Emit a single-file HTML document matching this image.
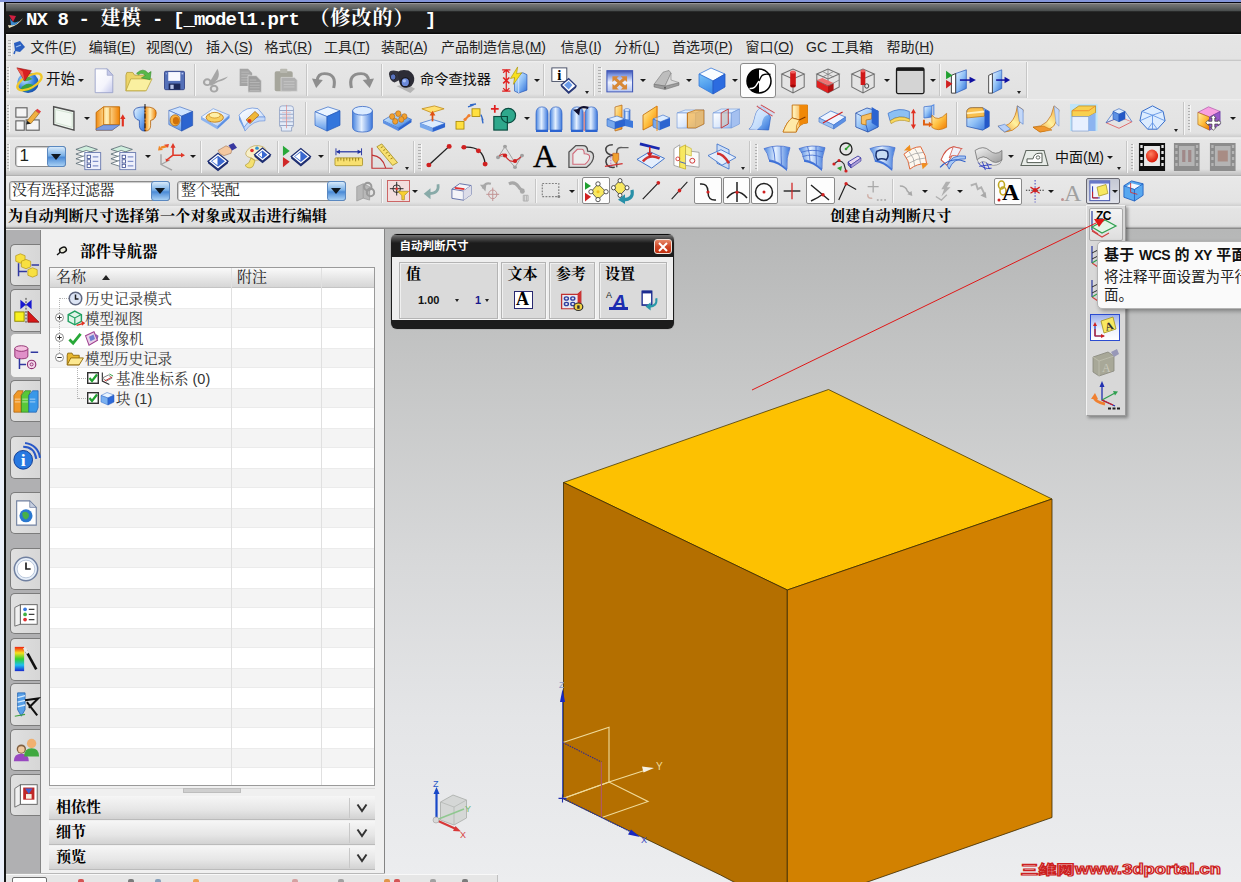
<!DOCTYPE html><html lang="zh"><head><meta charset="utf-8"><title>NX 8</title><style>
*{margin:0;padding:0;box-sizing:border-box}
html,body{width:1241px;height:882px;overflow:hidden;background:#e6e6e6;font-family:"Liberation Sans","Noto Sans CJK SC",sans-serif;}
.a{position:absolute}
.t{position:absolute;white-space:nowrap;line-height:1}
.song{font-family:"Liberation Serif","Noto Serif CJK SC",serif}
.song2{font-family:"Liberation Sans","Noto Serif CJK SC",serif}
.hei{font-family:"Liberation Sans","Noto Sans CJK SC",sans-serif}
.mono{font-family:"Liberation Mono","Noto Serif CJK SC",monospace}
u{text-decoration:underline;text-underline-offset:1px}
svg{position:absolute;overflow:visible}
.grip{position:absolute;width:2.5px;background-image:repeating-linear-gradient(to bottom,#b0b0b0 0,#b0b0b0 1.2px,transparent 1.2px,transparent 3px);box-shadow:1px 0 0 rgba(255,255,255,0.7)}
.sep{position:absolute;width:2px;background:linear-gradient(to right,#c6c6c6 0,#c6c6c6 1px,#f6f6f6 1px,#f6f6f6 2px)}
.dd{position:absolute;width:0;height:0;border-left:3px solid transparent;border-right:3px solid transparent;border-top:3.8px solid #1a1a1a}
.dds{position:absolute;width:0;height:0;border-left:2.5px solid transparent;border-right:2.5px solid transparent;border-top:3px solid #222}
.tab{position:absolute;left:9.5px;width:31.5px;background:linear-gradient(to right,#e0e0e0,#d6d6d6);border:1px solid #7c7c7c;border-right:none;border-radius:5px 0 0 5px}
.hl{position:absolute;background:#fdfdfd;border:1px solid #8a8a8a;border-radius:2px}
</style></head><body>
<div class="a" style="left:0;top:0;width:1241px;height:3px;background:#8395da"></div>
<div class="a" style="left:0;top:2px;width:4px;height:880px;background:#ecf0fa"></div>
<div class="a" style="left:4px;top:2px;width:1237px;height:32px;background:linear-gradient(to bottom,#050510 0,#050510 1px,#a4a4a4 1px,#747474 2.5px,#5c6060 6px,#484c4c 9px,#1c1c1c 9.7px,#1c1c1c 30px,#0a0a0a 31px)"></div>
<div class="a" style="left:4px;top:2px;width:1.5px;height:880px;background:#151515"></div>
<div class="t mono" style="left:26px;top:7.5px;font-size:19px;font-weight:bold;color:#fff;letter-spacing:-0.9px">NX 8 - <span class="song" style="font-size:20px;letter-spacing:0.5px;margin-left:1px">建模</span> - [_model1.prt <span class="song" style="font-size:20px;letter-spacing:1px">（修改的）</span> ]</div>
<svg style="left:7px;top:13px" width="18" height="16" viewBox="0 0 18 16"><path d="M2 2 L9 3 L6 9 Z" fill="#d02040"/><path d="M1 12 Q8 14 16 5 Q12 12 2 15 Z" fill="#e8e0c0"/><path d="M3 5 Q6 12 12 8 Q9 13 4 12 Z" fill="#3a8ad0"/></svg>
<div class="a" style="left:5.5px;top:34px;width:1236px;height:27px;background:linear-gradient(to bottom,#fafafa 0,#e5e5e5 1.5px,#e3e3e3 25px,#c8c8c8 26.5px,#dcdcdc 27px)"></div>
<div class="grip" style="left:8px;top:40px;height:16px"></div>
<div class="t hei" id="m0" style="left:30.5px;top:40px;font-size:14px;color:#222">文件(<u>F</u>)</div>
<div class="t hei" id="m1" style="left:88.7px;top:40px;font-size:14px;color:#222">编辑(<u>E</u>)</div>
<div class="t hei" id="m2" style="left:146.0px;top:40px;font-size:14px;color:#222">视图(<u>V</u>)</div>
<div class="t hei" id="m3" style="left:206.0px;top:40px;font-size:14px;color:#222">插入(<u>S</u>)</div>
<div class="t hei" id="m4" style="left:264.6px;top:40px;font-size:14px;color:#222">格式(<u>R</u>)</div>
<div class="t hei" id="m5" style="left:324.0px;top:40px;font-size:14px;color:#222">工具(<u>T</u>)</div>
<div class="t hei" id="m6" style="left:381.0px;top:40px;font-size:14px;color:#222">装配(<u>A</u>)</div>
<div class="t hei" id="m7" style="left:441.0px;top:40px;font-size:14px;color:#222">产品制造信息(<u>M</u>)</div>
<div class="t hei" id="m8" style="left:560.5px;top:40px;font-size:14px;color:#222">信息(<u>I</u>)</div>
<div class="t hei" id="m9" style="left:614.5px;top:40px;font-size:14px;color:#222">分析(<u>L</u>)</div>
<div class="t hei" id="m10" style="left:672.0px;top:40px;font-size:14px;color:#222">首选项(<u>P</u>)</div>
<div class="t hei" id="m11" style="left:745.5px;top:40px;font-size:14px;color:#222">窗口(<u>O</u>)</div>
<div class="t hei" id="m12" style="left:806.0px;top:40px;font-size:14px;color:#222">GC 工具箱</div>
<div class="t hei" id="m13" style="left:886.5px;top:40px;font-size:14px;color:#222">帮助(<u>H</u>)</div>
<svg style="left:11px;top:39px" width="16" height="16" viewBox="0 0 16 16"><path d="M3 4 L9 2 L14 8 L9 13 L4 12 Z" fill="#2a5fc0"/><path d="M4 12 L3 15" stroke="#2a5fc0" stroke-width="1.5"/><path d="M5 8 L10 6" stroke="#9cc0f0" stroke-width="1.2"/></svg>
<div class="a" style="left:5.5px;top:61px;width:1236px;height:38px;background:linear-gradient(to bottom,#f0f0f0 0,#e6e6e6 2px,#e2e2e2 33px,#d2d2d2 36.5px,#e8e8e8 37px)"></div>
<div class="a" style="left:1027px;top:61px;width:214px;height:38px;background:#e5e5e5"></div>
<div class="a" style="left:5.5px;top:99px;width:1236px;height:39px;background:linear-gradient(to bottom,#f0f0f0 0,#e6e6e6 2px,#e2e2e2 34px,#d0d0d0 37.5px,#e8e8e8 38px)"></div>
<div class="a" style="left:5.5px;top:138px;width:1236px;height:38px;background:linear-gradient(to bottom,#f0f0f0 0,#e6e6e6 2px,#e0e0e0 31px,#c4c4c4 36.5px,#a8a8a8 38px)"></div>
<div class="a" style="left:5.5px;top:176px;width:1236px;height:30px;background:linear-gradient(to bottom,#eeeeee 0,#e8e8e8 2px,#e3e3e3 26px,#d2d2d2 29.5px,#c8c8c8 30px)"></div>
<div class="a" style="left:5.5px;top:206px;width:1236px;height:23px;background:linear-gradient(to bottom,#ececec 0,#e4e4e4 3px,#e0e0e0 19px,#d0d0d0 21px,#8c8c8c 22px,#8c8c8c 23px)"></div>
<div class="t song" style="left:8px;top:209px;font-size:15px;font-weight:bold;color:#000;letter-spacing:0.2px">为自动判断尺寸选择第一个对象或双击进行编辑</div>
<div class="t song" style="left:830px;top:209px;font-size:15px;font-weight:bold;color:#000;letter-spacing:0.2px">创建自动判断尺寸</div>
<svg width="0" height="0" style="left:0;top:0"><defs>
<linearGradient id="gB" x1="0" y1="0" x2="1" y2="1"><stop offset="0" stop-color="#e8f4ff"/><stop offset="0.5" stop-color="#8fc0f6"/><stop offset="1" stop-color="#2f6fd8"/></linearGradient>
<linearGradient id="gBh" x1="0" y1="0" x2="1" y2="0"><stop offset="0" stop-color="#4a86e0"/><stop offset="0.45" stop-color="#e4f0ff"/><stop offset="1" stop-color="#3c78dc"/></linearGradient>
<linearGradient id="gBv" x1="0" y1="0" x2="0" y2="1"><stop offset="0" stop-color="#eef6ff"/><stop offset="1" stop-color="#5c98ea"/></linearGradient>
<linearGradient id="gO" x1="0" y1="0" x2="1" y2="1"><stop offset="0" stop-color="#fff0b0"/><stop offset="0.5" stop-color="#ffc040"/><stop offset="1" stop-color="#f07800"/></linearGradient>
<linearGradient id="gOh" x1="0" y1="0" x2="1" y2="0"><stop offset="0" stop-color="#f08a10"/><stop offset="0.45" stop-color="#fff0b8"/><stop offset="1" stop-color="#f08000"/></linearGradient>
<linearGradient id="gY" x1="0" y1="0" x2="1" y2="1"><stop offset="0" stop-color="#fffbd0"/><stop offset="1" stop-color="#f0c830"/></linearGradient>
<linearGradient id="gG" x1="0" y1="0" x2="1" y2="1"><stop offset="0" stop-color="#f4f4f4"/><stop offset="1" stop-color="#9a9a9a"/></linearGradient>
<linearGradient id="gCombo" x1="0" y1="0" x2="0" y2="1"><stop offset="0" stop-color="#cfe4f8"/><stop offset="0.5" stop-color="#5b9ee0"/><stop offset="1" stop-color="#9cc8f0"/></linearGradient>
<radialGradient id="gGlobe" cx="0.35" cy="0.35" r="0.8"><stop offset="0" stop-color="#bfe4ff"/><stop offset="0.6" stop-color="#2a78d8"/><stop offset="1" stop-color="#103c90"/></radialGradient>
<radialGradient id="gRed" cx="0.4" cy="0.35" r="0.7"><stop offset="0" stop-color="#ff8060"/><stop offset="1" stop-color="#d81000"/></radialGradient>
<linearGradient id="gBl" x1="0" y1="0" x2="1" y2="1"><stop offset="0" stop-color="#ffffff"/><stop offset="0.6" stop-color="#dbe8fb"/><stop offset="1" stop-color="#8db4f0"/></linearGradient><linearGradient id="gOb" x1="0" y1="1" x2="1" y2="0"><stop offset="0" stop-color="#f08418"/><stop offset="0.5" stop-color="#fff2a0"/><stop offset="1" stop-color="#f8a030"/></linearGradient></defs></svg><div class="grip" style="left:6.5px;top:67px;height:27px"></div><svg style="left:14px;top:66px" width="29" height="28" viewBox="0 0 30 30" preserveAspectRatio="none"><circle cx="14.500" cy="18" r="11" fill="url(#gGlobe)"/><path d="M7 24 Q13 16 21 21 Q18 28 10 27 Z" fill="#3aa040"/><path d="M9 12 Q14 9 19 14 Q14 17 10 16 Z" fill="#48a848"/><ellipse cx="16" cy="17" rx="14" ry="6.500" fill="none" stroke="#f0c828" stroke-width="2.400" transform="rotate(-30 16 17)"/><path d="M3 2 L18 5 L11 16 Z" fill="#d82020" stroke="#901010" stroke-width="0.6"/><path d="M3 2 L11 16 L9 6 Z" fill="#f06050"/></svg><div class="t hei" style="left:46px;top:72px;font-size:14.5px;color:#111;">开始</div><div class="dd" style="left:78px;top:78.7px"></div><svg style="left:92px;top:66.5px" width="24" height="27.5" viewBox="0 0 30 30" preserveAspectRatio="none"><defs><linearGradient id="gNew" x1="0" y1="0" x2="1" y2="1"><stop offset="0" stop-color="#ffffff"/><stop offset="0.6" stop-color="#f4f4fc"/><stop offset="1" stop-color="#c4c8ec"/></linearGradient></defs><path d="M4 2 L19 2 L26 9 L26 28 L4 28 Z" fill="url(#gNew)" stroke="#98a0c8" stroke-width="1"/><path d="M19 2 L19 9 L26 9 Z" fill="#c4c8e8" stroke="#98a0c8" stroke-width="0.8"/></svg><svg style="left:124px;top:65.5px" width="29" height="27.5" viewBox="0 0 30 30" preserveAspectRatio="none"><path d="M2 10 L2 27 L22 27 L22 10 L11 10 L9 7 L3 7 Z" fill="#ecd468" stroke="#b09a30" stroke-width="0.8"/><path d="M2 27 L7 14 L29 14 L23 27 Z" fill="#faf0a0" stroke="#b8a238" stroke-width="0.8"/><path d="M13 8 Q20 1 25 8 L28 6 L27 15 L18 13 L22 10.500 Q19 6 15 9.500 Z" fill="#58b848" stroke="#308828" stroke-width="0.6"/></svg><svg style="left:162px;top:69px" width="25" height="23" viewBox="0 0 30 30" preserveAspectRatio="none"><rect x="3" y="3" width="24" height="24" rx="1.500" fill="#5470b8" stroke="#2a3a80" stroke-width="1"/><rect x="7.500" y="4" width="14.500" height="11.500" fill="#f8f8ff"/><rect x="8" y="19" width="14" height="8" fill="#1c2858"/><rect x="10" y="20.500" width="4" height="5.500" fill="#b8c4e8"/><rect x="23.500" y="5" width="2" height="2" fill="#b8c4f0"/><rect x="4.500" y="5" width="1.500" height="2" fill="#8ea0d8"/></svg><div class="sep" style="left:194px;top:64px;height:32px"></div><svg style="left:201px;top:67px" width="29" height="26" viewBox="0 0 30 30" preserveAspectRatio="none"><path d="M17 2 Q20 8 17 14 L11 21 L8.500 18.500 Z" fill="#a6a6a6"/><path d="M28 11 Q24 16 18 17 L10 22 L9 19 Z" fill="#a6a6a6"/><g fill="none" stroke="#a6a6a6" stroke-width="2.200"><circle cx="6.500" cy="17.500" r="3.400"/><circle cx="13.500" cy="25" r="3.400"/></g></svg><svg style="left:238px;top:67px" width="25" height="26" viewBox="0 0 30 30" preserveAspectRatio="none"><path d="M2 2 L12 2 L17 7 L17 22 L2 22 Z" fill="#a4a4a4"/><path d="M4 6h9M4 9h11M4 12h11M4 15h11M4 18h11" stroke="#bcbcbc" stroke-width="1"/><path d="M12 10 L22 10 L28 16 L28 29 L12 29 Z" fill="#9e9e9e" stroke="#dcdcdc" stroke-width="0.8"/><path d="M14 15h8M14 18h12M14 21h12M14 24h12M14 27h12" stroke="#bcbcbc" stroke-width="1"/></svg><svg style="left:272px;top:67px" width="27" height="26" viewBox="0 0 30 30" preserveAspectRatio="none"><rect x="3" y="5" width="20" height="23" rx="2" fill="#a6a69c"/><rect x="9" y="2" width="8" height="5" rx="1" fill="#b8b8b0"/><path d="M10 12 L25 12 L28 15 L28 28 L10 28 Z" fill="#b0b0b0" stroke="#d8d8d8" stroke-width="0.8"/><path d="M13 17h12M13 20h12M13 23h12" stroke="#c8c8c8" stroke-width="1"/></svg><div class="sep" style="left:305.5px;top:64px;height:32px"></div><svg style="left:312px;top:68px" width="25" height="24" viewBox="0 0 30 30" preserveAspectRatio="none"><path d="M26 25 Q30 7 15 7 Q7 7 6 16" fill="none" stroke="#8e8e8e" stroke-width="3.600"/><path d="M0 13 L13 15 L5 25 Z" fill="#8e8e8e"/></svg><svg style="left:348px;top:68px" width="26" height="24" viewBox="0 0 30 30" preserveAspectRatio="none"><path d="M4 25 Q0 7 15 7 Q23 7 24 16" fill="none" stroke="#8e8e8e" stroke-width="3.600"/><path d="M30 13 L17 15 L25 25 Z" fill="#8e8e8e"/></svg><div class="sep" style="left:381px;top:64px;height:32px"></div><svg style="left:388px;top:67px" width="28" height="26" viewBox="0 0 30 30" preserveAspectRatio="none"><path d="M9 22 L24 30 L29 25 L20 20 Z" fill="#b4b4b4"/><path d="M1 8 Q1 4 6 4 L11 5 L14 14 L7 18 Q2 16 1 8 Z" fill="#34343e"/><ellipse cx="5.500" cy="11.500" rx="3" ry="3.600" fill="#5a74c0" stroke="#20202a" stroke-width="1"/><path d="M10 6 Q14 2 22 4 Q29 8 28 16 Q27 23 20 24 Q13 24 12 17 Z" fill="#2c2c36"/><ellipse cx="18.500" cy="17.500" rx="4.600" ry="5.200" fill="#6a88d8" stroke="#181820" stroke-width="1.400"/><ellipse cx="17.500" cy="16" rx="1.800" ry="2" fill="#a8c0f4"/></svg><div class="t hei" style="left:420px;top:72px;font-size:14.2px;color:#111;">命令查找器</div><svg style="left:498px;top:65px" width="31" height="29" viewBox="0 0 30 30" preserveAspectRatio="none"><path d="M16 12 L24 8 L28 10 L28 26 L20 29 L16 27 Z" fill="url(#gB)" stroke="#2858b8" stroke-width="0.7"/><path d="M16 12 L20 14 L20 29" fill="none" stroke="#dceaff" stroke-width="0.8"/><path d="M12 14 L19 2 L18 9 L23 8 L15 20 L16 13 Z" fill="#f8e020" stroke="#a89000" stroke-width="0.6"/><path d="M8 5 L8 27 M5 8 L8 5 L11 8 M5 24 L8 27 L11 24 M4 5h8 M4 27h8" fill="none" stroke="#e02020" stroke-width="1.2"/><path d="M5 13 L11 19 M11 13 L5 19" stroke="#e02020" stroke-width="1.5"/></svg><div class="dd" style="left:533.5px;top:78.7px"></div><div class="sep" style="left:543px;top:64px;height:32px"></div><svg style="left:550px;top:67px" width="28" height="27" viewBox="0 0 30 30" preserveAspectRatio="none"><rect x="2" y="1" width="16" height="15" fill="#fff" stroke="#404860" stroke-width="1"/><text x="10" y="14.5" font-family="Liberation Serif, serif" font-weight="bold" font-size="16" text-anchor="middle" fill="#000">i</text><path d="M12 20 L20 13 L28 21 L20 28 Z" fill="#fff" stroke="#283878" stroke-width="1.4"/><path d="M15 20 L20 15.5 L24 20 L20 25 Z" fill="#6a9ae8"/><path d="M12 20 L20 28 L28 21 L28 23 L20 30 L12 22 Z" fill="#283878"/></svg><div class="dds" style="left:584.5px;top:90.5px"></div><div class="sep" style="left:593px;top:64px;height:32px"></div><div class="grip" style="left:598px;top:67px;height:27px"></div><svg style="left:605.5px;top:68.5px" width="27.5" height="24.5" viewBox="0 0 30 30" preserveAspectRatio="none"><defs><linearGradient id="gFit" x1="0" y1="0" x2="0" y2="1"><stop offset="0" stop-color="#3c50b0"/><stop offset="0.180" stop-color="#7890dc"/><stop offset="0.550" stop-color="#eef2ff"/><stop offset="1" stop-color="#b4c4f0"/></linearGradient></defs><rect x="1" y="2" width="28" height="26" fill="url(#gFit)" stroke="#4058b8" stroke-width="1.200"/><g fill="#d88838"><path d="M7 9 L14 9 L7 16 Z"/><path d="M23 9 L16 9 L23 16 Z"/><path d="M7 25 L14 25 L7 18 Z"/><path d="M23 25 L16 25 L23 18 Z"/><path d="M10 12 L20 22 M20 12 L10 22" stroke="#d88838" stroke-width="3.600"/></g></svg><div class="dd" style="left:640px;top:78.7px"></div><svg style="left:651px;top:67px" width="30" height="26" viewBox="0 0 30 30" preserveAspectRatio="none"><path d="M3 20 L12 6 L18 4 L20 7 L14 22 Z" fill="#bdbdbd" stroke="#808080" stroke-width="0.7"/><path d="M3 20 L14 22 L28 18 L28 21 L14 26 L3 23 Z" fill="#9c9c9c" stroke="#707070" stroke-width="0.6"/><path d="M14 22 L20 7 L20 15 L28 18 Z" fill="#d8d8d8" stroke="#808080" stroke-width="0.6"/><circle cx="14" cy="24" r="1" fill="#505050"/></svg><div class="dd" style="left:686px;top:78.7px"></div><svg style="left:697px;top:65px" width="30" height="30" viewBox="0 0 30 30" preserveAspectRatio="none"><defs><linearGradient id="gBc" x1="0" y1="0" x2="0.300" y2="1"><stop offset="0" stop-color="#7cc4f8"/><stop offset="1" stop-color="#3c8ce8"/></linearGradient></defs><path d="M2 9 L14 3 L28 9 L16 16 Z" fill="#fafdff" stroke="#3878d8" stroke-width="0.8"/><path d="M2 9 L16 16 L16 29 L2 21 Z" fill="url(#gBc)" stroke="#3878d8" stroke-width="0.8"/><path d="M16 16 L28 9 L28 22 L16 29 Z" fill="#2c6ce0" stroke="#2458c0" stroke-width="0.8"/></svg><div class="dd" style="left:732px;top:78.7px"></div><div class="hl" style="left:740px;top:63px;width:36px;height:34.5px;border-radius:3px"></div><svg style="left:743.5px;top:65.5px" width="30" height="30" viewBox="0 0 30 30" preserveAspectRatio="none"><circle cx="15" cy="15" r="12" fill="#fff" stroke="#000" stroke-width="1.500"/><path d="M15 3 A12 12 0 0 0 15 27 Z" fill="#000"/><path d="M5.500 22.500 Q11 23 13 18 L15 15" stroke="#fff" fill="none" stroke-width="1.400"/><path d="M15 15 L17 11 Q19 7 26.500 8.500" stroke="#000" fill="none" stroke-width="1.400"/></svg><svg style="left:779px;top:65px" width="28" height="30" viewBox="0 0 30 30" preserveAspectRatio="none"><path d="M3 9 L15 4 L27 9 L15 14 Z M3 9 L3 22 L15 28 L27 22 L27 9 M15 14 L15 28" fill="#e4e4e4" fill-opacity="0.7" stroke="#707070" stroke-width="1.1"/><rect x="12" y="7" width="6" height="14" fill="#d01818"/><ellipse cx="15" cy="7" rx="3" ry="1.6" fill="#f06060"/><ellipse cx="15" cy="21" rx="3" ry="1.6" fill="#a00808"/></svg><svg style="left:814px;top:65px" width="28" height="30" viewBox="0 0 30 30" preserveAspectRatio="none"><path d="M3 9 L15 4 L27 9 L15 14 Z M3 9 L3 22 L15 28 L27 22 L27 9 M15 14 L15 28" fill="#e4e4e4" fill-opacity="0.7" stroke="#707070" stroke-width="1.1"/><path d="M3 15 L15 20 L15 28 L3 22 Z" fill="#e02020"/><path d="M15 20 L21 18 L21 25 L15 28 Z" fill="#b01010"/><path d="M3 15 L9 13 L21 18 L15 20 Z" fill="#f07070"/><path d="M3 15 L15 21 L27 15 M15 4 L15 14 M9 6.5 L21 12 M21 6.5 L9 12" fill="none" stroke="#808080" stroke-width="0.8"/></svg><svg style="left:849px;top:65px" width="28" height="30" viewBox="0 0 30 30" preserveAspectRatio="none"><path d="M3 9 L15 4 L27 9 L15 14 Z M3 9 L3 22 L15 28 L27 22 L27 9 M15 14 L15 28" fill="#e4e4e4" fill-opacity="0.7" stroke="#707070" stroke-width="1.1"/><rect x="12.5" y="6" width="5" height="14" fill="#d01818"/><ellipse cx="15" cy="6" rx="2.5" ry="1.4" fill="#f06060"/><circle cx="19" cy="21" r="2.2" fill="none" stroke="#404040" stroke-width="1"/></svg><div class="dd" style="left:884px;top:78.7px"></div><svg style="left:894.5px;top:65.5px" width="30.5" height="29.5" viewBox="0 0 30 30" preserveAspectRatio="none"><rect x="1.5" y="2" width="27" height="26" rx="1.5" fill="#d4d4d4" stroke="#1a1a1a" stroke-width="1.3"/><rect x="1.5" y="2" width="27" height="3" fill="#1a1a1a"/></svg><div class="dd" style="left:930px;top:78.7px"></div><div class="sep" style="left:939px;top:64px;height:32px"></div><svg style="left:945px;top:67px" width="32" height="28" viewBox="0 0 30 30" preserveAspectRatio="none"><path d="M10 7 L20 3 L20 23 L10 28 Z" fill="url(#gB)" stroke="#2858b8" stroke-width="0.7"/><path d="M6 9 L10 7 L10 28 L6 28 Z" fill="#fff" stroke="#303030" stroke-width="0.9"/><path d="M1 4 L7 9 L1 13 Z" fill="#20a030"/><path d="M1 14 L7 18 L1 23 Z" fill="#d02020"/><path d="M14 14 L24 14" stroke="#1010a0" stroke-width="1.6"/><path d="M23 10.5 L29 14 L23 17.5 Z" fill="#1010a0"/></svg><svg style="left:984px;top:67px" width="28" height="28" viewBox="0 0 30 30" preserveAspectRatio="none"><path d="M9 7 L19 3 L19 23 L9 28 Z" fill="url(#gB)" stroke="#2858b8" stroke-width="0.7"/><path d="M5 9 L9 7 L9 28 L5 28 Z" fill="#fff" stroke="#303030" stroke-width="0.9"/><path d="M13 14 L23 14" stroke="#1010a0" stroke-width="1.6"/><path d="M22 10.5 L28 14 L22 17.5 Z" fill="#1010a0"/></svg><div class="dds" style="left:1016.5px;top:90.5px"></div><div class="sep" style="left:1025.5px;top:62px;height:36px"></div><div class="grip" style="left:6.5px;top:105px;height:27px"></div><svg style="left:14px;top:105px" width="28" height="28" viewBox="0 0 30 30" preserveAspectRatio="none"><rect x="2" y="3" width="12" height="10" fill="#f4f4f4" stroke="#606060" stroke-width="1.2"/><rect x="2" y="17" width="9" height="10" fill="#f4f4f4" stroke="#606060" stroke-width="1.2"/><rect x="13" y="16" width="14" height="11" fill="#f4f4f4" stroke="#606060" stroke-width="1.2"/><path d="M14 17 L23 6 L27 9 L18 20 Z" fill="#f0b040" stroke="#805010" stroke-width="0.6"/><path d="M23 6 L25 4 L29 7 L27 9 Z" fill="#e04040"/><path d="M14 17 L13 21 L18 20 Z" fill="#202020"/></svg><svg style="left:50.5px;top:104px" width="26.5" height="28" viewBox="0 0 30 30" preserveAspectRatio="none"><path d="M3 3 L26 8 L26 28 L3 22 Z" fill="#f2f8f2" stroke="#505050" stroke-width="1.6"/><path d="M5 6 L24 10 L24 25 L5 20 Z" fill="none" stroke="#cfe0cf" stroke-width="1"/></svg><div class="dd" style="left:84px;top:116.7px"></div><svg style="left:94px;top:104px" width="32" height="28" viewBox="0 0 30 30" preserveAspectRatio="none"><path d="M2 9 L9 3 L24 3 L24 22 L17 28 L2 28 Z" fill="url(#gOh)" stroke="#c06800" stroke-width="0.9"/><path d="M9 3 L9 22 L2 28 M9 22 L24 22 M15 4 L15 22" fill="none" stroke="#d07808" stroke-width="0.9"/><path d="M2 26.500 L9 22.500 L24 22.500 L17 28 L2 28 Z" fill="#7c9ce0" stroke="#3860b8" stroke-width="0.5"/><path d="M27 24 L27 15" stroke="#e03020" stroke-width="2"/><path d="M24.500 16 L27 11 L29.500 16 Z" fill="#e03020"/></svg><svg style="left:130.5px;top:104px" width="28" height="29" viewBox="0 0 30 30" preserveAspectRatio="none"><path d="M3 8 Q3 3 15 3 L15 28 Q9 28 9 22 L9 17 Q3 16 3 8 Z" fill="url(#gB)" stroke="#1c48a8" stroke-width="0.8"/><path d="M15 3 Q27 3 27 9 Q27 16 21 17 L21 22 Q21 28 15 28 Z" fill="url(#gOh)" stroke="#b05800" stroke-width="0.8"/><path d="M15 0 L15 30" stroke="#101010" stroke-width="1" stroke-dasharray="5 2 1 2"/></svg><svg style="left:166.5px;top:104px" width="27.5" height="28" viewBox="0 0 30 30" preserveAspectRatio="none"><path d="M2 7 L14 3 L28 8 L16 13 Z" fill="#cfe4ff" stroke="#2858b8" stroke-width="0.6"/><path d="M2 7 L16 13 L16 29 L2 22 Z" fill="url(#gBv)" stroke="#2858b8" stroke-width="0.6"/><path d="M16 13 L28 8 L28 23 L16 29 Z" fill="#2c64d0" stroke="#1c48a8" stroke-width="0.6"/><ellipse cx="8.8" cy="17.5" rx="5.4" ry="6" fill="#f8b040" stroke="#a05808" stroke-width="0.7"/><ellipse cx="9.8" cy="18" rx="3.4" ry="4" fill="#d07008"/></svg><svg style="left:199.5px;top:104px" width="30.5" height="28" viewBox="0 0 30 30" preserveAspectRatio="none"><path d="M1 14 L13 5 L29 12 L17 24 Z" fill="url(#gBl)" stroke="#6c98e0" stroke-width="0.7"/><path d="M1 14 L17 24 L17 27 L1 17 Z" fill="#8cb4f0"/><path d="M17 24 L29 12 L29 15 L17 27 Z" fill="#5c90e4"/><ellipse cx="14.500" cy="14.500" rx="8.500" ry="5" fill="#f8d060" stroke="#c07810" stroke-width="0.9"/><ellipse cx="14.500" cy="12" rx="5.500" ry="3" fill="#fff0a8" stroke="#c88818" stroke-width="0.7"/></svg><svg style="left:236px;top:104px" width="30" height="28" viewBox="0 0 30 30" preserveAspectRatio="none"><path d="M3 12 Q10 2 22 5 L29 14 Q16 12 8 25 Z" fill="url(#gBl)" stroke="#5c88d8" stroke-width="0.7"/><path d="M8 25 Q16 12 29 14 L29 18 Q17 17 9 29 Z" fill="#c4d8f8" stroke="#5c88d8" stroke-width="0.6"/><path d="M3 12 L8 25 L9 29 L3 17 Z" fill="#6c9ce8"/><path d="M10 17 L19 8 L23 12 L14 21 Z" fill="#f0b838" stroke="#a06008" stroke-width="0.7"/><circle cx="13.500" cy="18" r="2" fill="#e03020"/></svg><svg style="left:277px;top:104px" width="19" height="28" viewBox="0 0 30 30" preserveAspectRatio="none"><path d="M4 5 Q4 2 8 2 L22 2 Q26 2 26 5 L26 23 Q26 25 23 25 L23 29 L7 29 L7 25 Q4 25 4 23 Z" fill="#e4ecf8" stroke="#8c9cc0" stroke-width="1"/><path d="M4 7h22M4 11h22M4 15h22M4 19h22M4 23h22" stroke="#98a8c8" stroke-width="1.100"/><path d="M15 1 L15 26" stroke="#e09090" stroke-width="1"/><path d="M8 9h14M8 13h14M8 17h14" stroke="#e8a8a8" stroke-width="0.7"/></svg><div class="sep" style="left:304.5px;top:102px;height:33px"></div><svg style="left:312px;top:104px" width="30" height="29" viewBox="0 0 30 30" preserveAspectRatio="none"><path d="M3 8 L16 3 L28 7 L15 13 Z" fill="#eaf4ff" stroke="#3068c8" stroke-width="0.7"/><path d="M3 8 L15 13 L15 28 L3 22 Z" fill="url(#gBv)" stroke="#3068c8" stroke-width="0.7"/><path d="M15 13 L28 7 L28 22 L15 28 Z" fill="#3476dc" stroke="#2458b8" stroke-width="0.7"/></svg><svg style="left:349px;top:104px" width="27" height="29" viewBox="0 0 30 30" preserveAspectRatio="none"><path d="M4 7 L4 24 Q4 29 15 29 Q26 29 26 24 L26 7 Z" fill="url(#gBh)" stroke="#2c60c4" stroke-width="0.8"/><ellipse cx="15" cy="7" rx="11" ry="4.5" fill="#dcecff" stroke="#2c60c4" stroke-width="0.8"/></svg><svg style="left:381.5px;top:103px" width="30.5" height="29" viewBox="0 0 30 30" preserveAspectRatio="none"><path d="M1 18 L14 10 L29 17 L16 26 Z" fill="url(#gB)" stroke="#3068c8" stroke-width="0.7"/><path d="M1 18 L16 26 L16 29 L1 21 Z" fill="#5c90e4"/><path d="M16 26 L29 17 L29 20 L16 29 Z" fill="#2c64d0"/><g fill="#f0a030" stroke="#a05808" stroke-width="0.5"><ellipse cx="10" cy="14" rx="2.6" ry="3"/><ellipse cx="16" cy="11" rx="2.6" ry="3"/><ellipse cx="22" cy="14" rx="2.6" ry="3"/><ellipse cx="13" cy="19" rx="2.6" ry="3"/><ellipse cx="19" cy="17" rx="2.6" ry="3"/></g></svg><svg style="left:418px;top:103px" width="29" height="29" viewBox="0 0 30 30" preserveAspectRatio="none"><path d="M4 6 L17 3 L27 6 L14 10 Z" fill="#ffe070" stroke="#c08810" stroke-width="0.8"/><path d="M2 21 L15 17 L28 21 L15 26 Z" fill="#dcecff" stroke="#3068c8" stroke-width="0.7"/><path d="M2 21 L15 26 L15 30 L2 25 Z" fill="#78a8ec"/><path d="M15 26 L28 21 L28 25 L15 30 Z" fill="#2c64d0"/><path d="M15 19 L15 12" stroke="#e05010" stroke-width="1.8"/><path d="M12 13 L15 8 L18 13 Z" fill="#e05010"/></svg><svg style="left:454px;top:103px" width="30" height="29" viewBox="0 0 30 30" preserveAspectRatio="none"><rect x="2" y="19" width="8" height="8" fill="#ffe040" stroke="#a08000" stroke-width="0.8"/><rect x="18" y="6" width="8" height="8" fill="#ffe040" stroke="#a08000" stroke-width="0.8"/><path d="M11 17 L15 13" stroke="#f08030" stroke-width="2.2"/><circle cx="11" cy="17" r="1.6" fill="#f08030"/><circle cx="15" cy="13" r="1.6" fill="#f08030"/><path d="M14 4 L20 2 M16 2 L22 1 M27 12 L29 18 M28 16 L29 21" stroke="#3068c8" stroke-width="1.4"/></svg><svg style="left:489px;top:103px" width="29" height="29" viewBox="0 0 30 30" preserveAspectRatio="none"><rect x="5" y="14" width="14" height="14" fill="#2fa88c" stroke="#0a4c40" stroke-width="1.2"/><circle cx="20" cy="13" r="7.5" fill="#2fa88c" stroke="#0a4c40" stroke-width="1.2"/><path d="M12.5 14 L19 14 L19 20.5" fill="none" stroke="#084838" stroke-width="1.2"/><path d="M2 6h8M6 2v8" stroke="#e02020" stroke-width="1.8"/></svg><div class="dd" style="left:523.5px;top:116.7px"></div><svg style="left:534px;top:104px" width="30" height="29" viewBox="0 0 30 30" preserveAspectRatio="none"><path d="M2 27 L2 10 Q2 3 8 3 Q14 3 14 10 L14 27 Z" fill="url(#gBh)" stroke="#2c60c4" stroke-width="0.7"/><path d="M16 27 L16 10 Q16 3 22 3 Q28 3 28 10 L28 27 Z" fill="url(#gBh)" stroke="#2c60c4" stroke-width="0.7"/><path d="M2 27 L14 27 L14 29 L2 29 Z M16 27 L28 27 L28 29 L16 29 Z" fill="#2c64d0"/></svg><svg style="left:569px;top:104px" width="30.5" height="29" viewBox="0 0 30 30" preserveAspectRatio="none"><path d="M2 27 L2 10 Q2 3 8 3 Q14 3 14 10 L14 27 Z" fill="url(#gBh)" stroke="#2c60c4" stroke-width="0.7"/><path d="M16 27 L16 10 Q16 3 22 3 Q28 3 28 10 L28 27 Z" fill="url(#gBh)" stroke="#2c60c4" stroke-width="0.7"/><path d="M2 27 L14 27 L14 29 L2 29 Z M16 27 L28 27 L28 29 L16 29 Z" fill="#2c64d0"/><path d="M15 8 L15 28" stroke="#e08080" stroke-width="1.2"/><path d="M8 9 Q10 1 19 4" fill="none" stroke="#101030" stroke-width="2.2"/><path d="M4 6 L10 12 L11 5 Z" fill="#101030"/></svg><svg style="left:605px;top:103px" width="30" height="30" viewBox="0 0 30 30" preserveAspectRatio="none"><path d="M10 4 L17 2 L17 26 L10 28 Z" fill="url(#gO)" stroke="#b05800" stroke-width="0.7" opacity="0.9"/><path d="M2 16 L12 13 L20 16 L10 19 Z" fill="#dcecff" stroke="#3068c8" stroke-width="0.6"/><path d="M2 16 L10 19 L10 26 L2 23 Z" fill="#78a8ec" stroke="#3068c8" stroke-width="0.6"/><path d="M10 19 L20 16 L20 23 L10 26 Z" fill="#2c64d0"/><rect x="19" y="7" width="6" height="10" fill="url(#gBh)" stroke="#2c60c4" stroke-width="0.6"/><ellipse cx="22" cy="7" rx="3" ry="1.4" fill="#dcecff" stroke="#2c60c4" stroke-width="0.5"/><path d="M20 16 L28 18 L28 25 L20 23 Z" fill="#3c78dc"/></svg><svg style="left:640.5px;top:103px" width="30" height="30" viewBox="0 0 30 30" preserveAspectRatio="none"><path d="M2 12 L16 3 L16 20 L2 27 Z" fill="url(#gO)" stroke="#c06800" stroke-width="0.8"/><path d="M12 16 L22 12 L29 15 L19 19 Z" fill="#dcecff" stroke="#3068c8" stroke-width="0.6"/><path d="M12 16 L19 19 L19 27 L12 24 Z" fill="#78a8ec" stroke="#3068c8" stroke-width="0.6"/><path d="M19 19 L29 15 L29 23 L19 27 Z" fill="#2c64d0"/><path d="M16 3 L16 28" stroke="#f09020" stroke-width="1"/></svg><svg style="left:675px;top:103px" width="31" height="30" viewBox="0 0 30 30" preserveAspectRatio="none"><path d="M2 10 L10 7 L28 7 L20 10 Z" fill="#dcecff" stroke="#6c94d8" stroke-width="0.6"/><path d="M2 10 L20 10 L20 25 L2 25 Z" fill="url(#gBl)" stroke="#6c94d8" stroke-width="0.6"/><path d="M20 10 L28 7 L28 21 L20 25 Z" fill="#a4c0f0" stroke="#6c94d8" stroke-width="0.6"/><path d="M12 10 L20 7 L28 7 L28 21 L20 25 L12 25 Z" fill="#f8b850" fill-opacity="0.75" stroke="#c07010" stroke-width="0.7"/><path d="M12 10 L12 25" stroke="#c07010" stroke-width="0.8"/></svg><svg style="left:710.5px;top:103px" width="30.5" height="30" viewBox="0 0 30 30" preserveAspectRatio="none"><path d="M2 10 L10 6 L28 6 L20 10 Z" fill="#dcecff" stroke="#6c94d8" stroke-width="0.6"/><path d="M2 10 L20 10 L20 25 L2 25 Z" fill="url(#gBl)" stroke="#6c94d8" stroke-width="0.6"/><path d="M20 10 L28 6 L28 21 L20 25 Z" fill="#a4c0f0" stroke="#6c94d8" stroke-width="0.6"/><path d="M10 10 L17 6 L17 21 L10 25 Z" fill="#c0c0c0" fill-opacity="0.7" stroke="#c03030" stroke-width="0.9"/></svg><svg style="left:746.5px;top:103px" width="29.5" height="30" viewBox="0 0 30 30" preserveAspectRatio="none"><path d="M2 26 Q6 24 8 14 Q10 5 16 4 L24 14 L22 27 Z" fill="url(#gB)" stroke="#2c60c4" stroke-width="0.7"/><path d="M8 14 Q10 5 16 4 L22 12 Q16 12 15 22 L10 27 L2 26 Q6 24 8 14 Z" fill="#e4f0ff" fill-opacity="0.7"/><path d="M10 3 L26 13 M14 2 L28 10" stroke="#d03030" stroke-width="1.1"/><path d="M14 2 L28 10 L26 13 L10 3 Z" fill="#c8dcf8" fill-opacity="0.6"/></svg><svg style="left:780.5px;top:103px" width="30.5" height="30" viewBox="0 0 30 30" preserveAspectRatio="none"><path d="M11 2 L26 2 L26 20 Q18 20 15 29 L2 29 Q6 18 11 15 Z" fill="url(#gOh)" stroke="#c06800" stroke-width="0.8"/><path d="M18 2 L26 2 L26 20 Q21 20 18 23 Z" fill="#f08808"/><path d="M11 15 L18 17 L24 14" fill="none" stroke="#803800" stroke-width="1.1"/><path d="M2 29 Q6 18 11 15 L18 17 Q14 22 15 29 Z" fill="#ffe9a8" stroke="#c06800" stroke-width="0.6"/></svg><svg style="left:816.5px;top:103px" width="29.5" height="30" viewBox="0 0 30 30" preserveAspectRatio="none"><path d="M2 15 L14 8 L29 14 L17 22 Z" fill="#eef4ff" stroke="#3068c8" stroke-width="0.7"/><path d="M2 15 L17 22 L17 26 L2 19 Z" fill="#9cc0f0" stroke="#3068c8" stroke-width="0.5"/><path d="M17 22 L29 14 L29 18 L17 26 Z" fill="#5c90e4" stroke="#3068c8" stroke-width="0.5"/><path d="M6 20 L26 9" stroke="#d02020" stroke-width="1.2"/></svg><svg style="left:853px;top:103px" width="28" height="30" viewBox="0 0 30 30" preserveAspectRatio="none"><path d="M3 10 L15 5 L27 8 L27 24 L16 29 L3 24 Z" fill="url(#gB)" stroke="#1c48a8" stroke-width="0.8"/><path d="M9 13 L20 10 L20 16 L14 17 L14 22 L9 21 Z" fill="#f8c060" stroke="#b06808" stroke-width="0.7"/><path d="M20 4 L27 8 L27 24 L20 20 Z" fill="#2c64d0"/><path d="M3 10 L9 13 M14 22 L16 29" stroke="#1c48a8" stroke-width="0.7"/></svg><svg style="left:886.5px;top:104px" width="30.5" height="28" viewBox="0 0 30 30" preserveAspectRatio="none"><path d="M1 10 Q12 3 22 8 L22 16 Q12 11 3 18 Z" fill="#8cc0f4" stroke="#3068c8" stroke-width="0.7"/><path d="M3 18 Q12 11 22 16 L22 19 Q12 15 4 21 Z" fill="#f8d860" stroke="#b08810" stroke-width="0.6"/><path d="M26 8 L26 24" stroke="#e03020" stroke-width="1.4"/><path d="M23.5 10 L26 5 L28.5 10 Z M23.5 22 L26 27 L28.5 22 Z" fill="#e03020"/></svg><svg style="left:921.5px;top:104px" width="29.5" height="28" viewBox="0 0 30 30" preserveAspectRatio="none"><path d="M2 3 L10 2 L10 14 L2 15 Z" fill="url(#gB)" stroke="#2c60c4" stroke-width="0.7"/><path d="M10 12 Q16 20 25 10 L25 25 Q16 30 10 25 Z" fill="url(#gO)" stroke="#c06800" stroke-width="0.7"/><path d="M2 17 L2 22 L8 22" fill="none" stroke="#e06010" stroke-width="2"/><path d="M7 19 L11 22 L7 25 Z" fill="#e06010"/><path d="M10 2 L12 1 L12 12" fill="none" stroke="#5c90e4" stroke-width="1.2"/></svg><div class="sep" style="left:956px;top:102px;height:33px"></div><svg style="left:963.5px;top:104px" width="28" height="28" viewBox="0 0 30 30" preserveAspectRatio="none"><path d="M3 9 Q3 4 9 4 L20 4 L27 8 L27 24 L20 28 L3 24 Z" fill="url(#gB)" stroke="#1c48a8" stroke-width="0.7"/><path d="M3 9 Q3 4 9 4 L20 4 Q22 8 22 13 L3 15 Z" fill="#f8c050" stroke="#b06808" stroke-width="0.7"/><path d="M3 10 L22 8" stroke="#fff0c0" stroke-width="2"/><path d="M22 6 L27 8 L27 24 L22 27 Z" fill="#2458c8"/></svg><svg style="left:997px;top:103px" width="29" height="29" viewBox="0 0 30 30" preserveAspectRatio="none"><path d="M1 24 Q18 26 21 3 L27 7 Q26 29 8 30 Z" fill="url(#gOb)" stroke="#c06800" stroke-width="0.7"/><path d="M1 24 L8 30 L4 28 Z" fill="#8cb4f0"/><path d="M21 3 L27 7 L27 22 L23 19 Z" fill="#c4d8f8" stroke="#3068c8" stroke-width="0.5"/><path d="M1 24 L8 22 L14 27 L8 30 Z" fill="#b8d0f8" stroke="#3068c8" stroke-width="0.5"/></svg><svg style="left:1032px;top:103px" width="30" height="29" viewBox="0 0 30 30" preserveAspectRatio="none"><path d="M1 25 Q18 25 22 3 L27 7 Q26 29 8 30 Z" fill="url(#gOb)" stroke="#c06800" stroke-width="0.7"/><path d="M22 3 L27 7 L27 24 L24 21 Z" fill="#c4d8f8" stroke="#7090c8" stroke-width="0.5"/><path d="M1 25 L8 30 L20 28 L12 24 Z" fill="#f09830" stroke="#c06800" stroke-width="0.5"/></svg><svg style="left:1068.5px;top:103px" width="29.5" height="29" viewBox="0 0 30 30" preserveAspectRatio="none"><rect x="1" y="1" width="28" height="28" fill="#bfe4f8"/><path d="M3 8 L10 3 L27 3 L27 10 L20 14 L3 14 Z" fill="#f8d050" stroke="#b08010" stroke-width="0.7"/><path d="M3 14 L20 14 L20 29 L3 29 Z" fill="#e8f0ff" stroke="#7090c8" stroke-width="0.6"/><path d="M20 14 L27 10 L27 29 L20 29 Z" fill="#8cb4f0"/><path d="M3 8 L20 8 L27 3" fill="none" stroke="#f09030" stroke-width="1"/></svg><svg style="left:1104px;top:104px" width="30" height="28" viewBox="0 0 30 30" preserveAspectRatio="none"><path d="M2 20 L15 26 L28 19 L16 14 Z" fill="none" stroke="#e06060" stroke-width="0.9"/><path d="M2 20 L10 8 L16 14 Z M28 19 L21 8 L16 14" fill="#e4ecfc" fill-opacity="0.6" stroke="#3068c8" stroke-width="0.7"/><path d="M9 8 L15 5 L21 8 L15 11 Z" fill="#dcecff" stroke="#2458b8" stroke-width="0.6"/><path d="M9 8 L15 11 L15 19 L9 16 Z" fill="#5c90e4" stroke="#2458b8" stroke-width="0.6"/><path d="M15 11 L21 8 L21 16 L15 19 Z" fill="#2458c8" stroke="#2458b8" stroke-width="0.6"/></svg><svg style="left:1138px;top:104px" width="29" height="28" viewBox="0 0 30 30" preserveAspectRatio="none"><path d="M15 2 L26 8 L28 18 L20 27 L10 27 L2 18 L4 8 Z" fill="#dcecff" stroke="#3068c8" stroke-width="1"/><path d="M4 8 L15 12 L26 8 M15 12 L15 27 M2 18 L15 12 L28 18 M10 27 L15 20 L20 27" fill="none" stroke="#5c90e4" stroke-width="0.9"/></svg><div class="dds" style="left:1173.5px;top:129px"></div><div class="sep" style="left:1183px;top:102px;height:33px"></div><div class="grip" style="left:1187.5px;top:105px;height:27px"></div><svg style="left:1195px;top:104px" width="29" height="28" viewBox="0 0 30 30" preserveAspectRatio="none"><path d="M3 9 L14 3 L26 8 L15 14 Z" fill="#f8a0e0" stroke="#a040a0" stroke-width="0.6"/><path d="M3 9 L15 14 L15 28 L3 22 Z" fill="url(#gO)" stroke="#b06808" stroke-width="0.7"/><path d="M15 14 L26 8 L26 22 L15 28 Z" fill="#9858c8" stroke="#6030a0" stroke-width="0.6"/><path d="M19 12 L22 15 L20.5 15 L20.5 18.500 L24 18.5 L24 17 L27 20 L24 23 L24 21.500 L20.5 21.5 L20.5 25 L22 25 L19 28 L16 25 L17.5 25 L17.5 21.500 L14 21.5 L14 23 L11 20 L14 17 L14 18.500 L17.5 18.5 L17.5 15 L16 15 Z" fill="#fff" stroke="#404040" stroke-width="0.8"/></svg><div class="dd" style="left:1229.5px;top:116.7px"></div><div class="grip" style="left:6.5px;top:144px;height:27px"></div><div class="a" style="left:14.5px;top:146px;width:51.5px;height:20.5px;background:#fff;border:1px solid #8a8a8a;border-radius:3px;box-shadow:inset 1px 1px 1px #c8c8c8"></div><div class="a" style="left:47px;top:146px;width:19px;height:20.5px;background:linear-gradient(to bottom,#d8eafa 0,#7ab0e6 45%,#4a8ad6 55%,#a8d0f4 100%);border:1px solid #5a88c0;border-radius:3px"></div><div class="a" style="left:51px;top:153.75px;width:0;height:0;border-left:5.500px solid transparent;border-right:5.500px solid transparent;border-top:6px solid #101820"></div><div class="t hei" style="left:19.5px;top:147.25px;font-size:17px;color:#1c241c;letter-spacing:-0.400px">1</div><svg style="left:75px;top:144px" width="28" height="27" viewBox="0 0 30 30" preserveAspectRatio="none"><path d="M1 6 L12 2 L24 6 L13 10 Z" fill="#cfeedd" stroke="#5c6c74" stroke-width="0.9"/><path d="M1 11.2 L12 7.2 L24 11.2 L13 15.2 Z" fill="#ffffff" stroke="#5c6c74" stroke-width="0.9"/><path d="M1 16.4 L12 12.4 L24 16.4 L13 20.4 Z" fill="#ffffff" stroke="#5c6c74" stroke-width="0.9"/><path d="M1 21.6 L12 17.6 L24 21.6 L13 25.6 Z" fill="#ffffff" stroke="#5c6c74" stroke-width="0.9"/><rect x="10.5" y="9.5" width="17" height="19" fill="#eef0fb" stroke="#6c7cb0" stroke-width="1"/><rect x="13" y="12.5" width="3.6" height="3.6" fill="#fff" stroke="#3c4c90" stroke-width="0.9"/><path d="M19 14.3 h6" stroke="#7c8cc8" stroke-width="1.3"/><rect x="13" y="17.5" width="3.6" height="3.6" fill="#fff" stroke="#3c4c90" stroke-width="0.9"/><path d="M19 19.3 h6" stroke="#7c8cc8" stroke-width="1.3"/><rect x="13" y="22.5" width="3.6" height="3.6" fill="#fff" stroke="#3c4c90" stroke-width="0.9"/><path d="M19 24.3 h6" stroke="#7c8cc8" stroke-width="1.3"/></svg><svg style="left:110px;top:144px" width="28" height="27" viewBox="0 0 30 30" preserveAspectRatio="none"><path d="M1 6 L12 2 L24 6 L13 10 Z" fill="#cfeedd" stroke="#5c6c74" stroke-width="0.9"/><path d="M1 11.2 L12 7.2 L24 11.2 L13 15.2 Z" fill="#ffffff" stroke="#5c6c74" stroke-width="0.9"/><path d="M1 16.4 L12 12.4 L24 16.4 L13 20.4 Z" fill="#ffffff" stroke="#5c6c74" stroke-width="0.9"/><path d="M1 21.6 L12 17.6 L24 21.6 L13 25.6 Z" fill="#ffffff" stroke="#5c6c74" stroke-width="0.9"/><rect x="10.5" y="9.5" width="17" height="19" fill="#eef0fb" stroke="#6c7cb0" stroke-width="1"/><rect x="13" y="12.5" width="3.6" height="3.6" fill="#fff" stroke="#3c4c90" stroke-width="0.9"/><path d="M19 14.3 h6" stroke="#7c8cc8" stroke-width="1.3"/><rect x="13" y="17.5" width="3.6" height="3.6" fill="#fff" stroke="#3c4c90" stroke-width="0.9"/><path d="M19 19.3 h6" stroke="#7c8cc8" stroke-width="1.3"/><rect x="13" y="22.5" width="3.6" height="3.6" fill="#fff" stroke="#3c4c90" stroke-width="0.9"/><path d="M19 24.3 h6" stroke="#7c8cc8" stroke-width="1.3"/></svg><div class="dd" style="left:144.5px;top:154.7px"></div><svg style="left:155px;top:143px" width="30" height="28" viewBox="0 0 30 30" preserveAspectRatio="none"><path d="M6 12 L6 23 L17 29 M6 23 L15 18" fill="none" stroke="#a4a4a4" stroke-width="1.4"/><path d="M18 4 L18 13 L27 13 M18 13 L12 18" fill="none" stroke="#e03828" stroke-width="1.6"/><path d="M15.500 5 L18 0 L20.500 5 Z M26 10.500 L30 13 L26 15.500 Z M10.500 16.500 L11 20 L14.500 18.500 Z" fill="#e03828"/><path d="M6 5 L13 3" stroke="#f08828" stroke-width="2.6"/><path d="M4 3 L8 7.500 L3 8 Z" fill="#f08828"/><path d="M9 2 L14 1 L13 5 Z" fill="#e84830"/></svg><div class="dd" style="left:190px;top:154.7px"></div><div class="sep" style="left:200px;top:141px;height:32px"></div><svg style="left:207px;top:143px" width="30" height="28" viewBox="0 0 30 30" preserveAspectRatio="none"><path d="M1 19.5 L11 28 L21 19.5 L21 21.7 L11 30.2 L1 21.7 Z" fill="#1c2c70"/><path d="M1 19.5 L11 11 L21 19.5 L11 28 Z" fill="#fff" stroke="#1c2c70" stroke-width="1.3"/><path d="M4 19.5 L11 13.6 L18 19.5 L11 25.4 Z" fill="#3a68d0"/><path d="M5 19.5 L10.5 15.2 L10.5 23.8 Z" fill="#fff"/><path d="M11 8 L19 3 L25 6 L24 11 L17 13.500 L13 11.500 Z" fill="#f4c8a0" stroke="#a07050" stroke-width="0.6"/><path d="M21.500 2.500 L26.500 0 L30 5 L25 8 Z" fill="#3838a0"/></svg><svg style="left:241px;top:143px" width="30" height="28" viewBox="0 0 30 30" preserveAspectRatio="none"><path d="M6 8 Q12 0 22 4 Q28 8 22 12 Q18 14 20 18 Q14 20 10 16 Q2 14 6 8 Z" fill="#f8f0c8" stroke="#c0a860" stroke-width="0.8"/><circle cx="11" cy="8" r="1.8" fill="#e03030"/><circle cx="16" cy="5.500" r="1.800" fill="#3090d0"/><path d="M10 16 Q9 22 4 24 Q8 29 12 25 L14 19 Z" fill="#f4e070" stroke="#b09828" stroke-width="0.7"/><path d="M13.5 12.5 L21.5 19.5 L29.5 12.5 L29.5 14.7 L21.5 21.7 L13.5 14.7 Z" fill="#1c2c70"/><path d="M13.5 12.5 L21.5 5.5 L29.5 12.5 L21.5 19.5 Z" fill="#fff" stroke="#1c2c70" stroke-width="1.3"/><path d="M16.5 12.5 L21.5 8.1 L26.5 12.5 L21.5 16.9 Z" fill="#3a68d0"/><path d="M17.5 12.5 L21 9.7 L21 15.3 Z" fill="#fff"/></svg><div class="sep" style="left:276.5px;top:141px;height:32px"></div><svg style="left:282px;top:143px" width="29" height="28" viewBox="0 0 30 30" preserveAspectRatio="none"><path d="M1 3 L8 8.500 L1 14 Z" fill="#28a838"/><path d="M1 15 L8 20 L1 26 Z" fill="#d02828"/><path d="M9.5 14.5 L19.5 23 L29.5 14.5 L29.5 16.7 L19.5 25.2 L9.5 16.7 Z" fill="#1c2c70"/><path d="M9.5 14.5 L19.5 6 L29.5 14.5 L19.5 23 Z" fill="#fff" stroke="#1c2c70" stroke-width="1.3"/><path d="M12.5 14.5 L19.5 8.6 L26.5 14.5 L19.5 20.4 Z" fill="#3a68d0"/><path d="M13.5 14.5 L19 10.2 L19 18.8 Z" fill="#fff"/></svg><div class="dd" style="left:317.5px;top:154.7px"></div><div class="sep" style="left:328px;top:141px;height:32px"></div><svg style="left:333.5px;top:144px" width="29.5" height="26" viewBox="0 0 30 30" preserveAspectRatio="none"><rect x="1" y="16" width="28" height="9" rx="1" fill="#f8e070" stroke="#a08818" stroke-width="0.8"/><path d="M4 16v4M7 16v3M10 16v4M13 16v3M16 16v4M19 16v3M22 16v4M25 16v3" stroke="#806800" stroke-width="0.8"/><path d="M3 9 L27 9" stroke="#2030a0" stroke-width="1.4"/><path d="M2 9 L6 6.500 L6 11.500 Z M28 9 L24 6.500 L24 11.500 Z" fill="#2030a0"/><path d="M2 5v8M28 5v8" stroke="#2030a0" stroke-width="1"/></svg><svg style="left:368.5px;top:143px" width="29.5" height="28" viewBox="0 0 30 30" preserveAspectRatio="none"><path d="M3 5 L3 27 L24 27" fill="none" stroke="#c03030" stroke-width="1.2"/><path d="M3 13 Q14 14 17 27" fill="none" stroke="#c03030" stroke-width="1.1"/><path d="M8 4 L13 1 L29 21 L24 24 Z" fill="#f8e070" stroke="#a08818" stroke-width="0.8"/><path d="M12 5l2-1M14.500 8l2-1M17 11l2-1M19.500 14l2-1M22 17l2-1" stroke="#806800" stroke-width="0.8"/></svg><div class="dds" style="left:404.5px;top:166.5px"></div><div class="sep" style="left:413px;top:141px;height:32px"></div><div class="grip" style="left:418px;top:144px;height:27px"></div><svg style="left:425px;top:142px" width="29" height="26.5" viewBox="0 0 30 30" preserveAspectRatio="none"><path d="M4 26 L25 5" stroke="#202020" stroke-width="1.4"/><circle cx="4" cy="26" r="2.600" fill="#d02020"/><circle cx="25" cy="5" r="2.600" fill="#d02020"/></svg><svg style="left:460px;top:142px" width="29" height="26.5" viewBox="0 0 30 30" preserveAspectRatio="none"><path d="M4 6 Q24 4 26 25" fill="none" stroke="#202020" stroke-width="1.4"/><circle cx="4" cy="6" r="2.600" fill="#d02020"/><circle cx="19" cy="10" r="2.600" fill="#d02020"/><circle cx="26" cy="25" r="2.600" fill="#d02020"/></svg><svg style="left:495px;top:143px" width="30" height="27" viewBox="0 0 30 30" preserveAspectRatio="none"><path d="M3 16 L10 4 L20 22 L27 14 L20 27 L10 14 Z" fill="none" stroke="#a0a0a0" stroke-width="1"/><path d="M3 16 Q8 10 10 14 Q14 22 20 20 Q24 18 27 14" fill="none" stroke="#d03030" stroke-width="1.2"/><g fill="#a0a0a0"><circle cx="10" cy="4" r="2"/><circle cx="3" cy="16" r="2"/><circle cx="27" cy="14" r="2"/><circle cx="20" cy="27" r="2"/></g><g fill="#d02020"><circle cx="10" cy="14" r="2.200"/><circle cx="20" cy="20" r="2.200"/></g></svg><div class="t song" style="left:533px;top:139.5px;font-size:32px;color:#111;color:#000;-webkit-text-stroke:0.4px #000">A</div><svg style="left:565.5px;top:143px" width="29.5" height="27" viewBox="0 0 30 30" preserveAspectRatio="none"><path d="M3 27 L3 10 L10 3 L17 3 Q22 3 22 9 Q28 9 28 15 Q28 21 21 27 Z" fill="#dcdcdc" stroke="#505050" stroke-width="1.300"/><path d="M7 23.500 L7 12 L11.500 7 L16 7 Q18.500 7 18.500 12 Q24 12 24 15.500 Q24 19 19.500 23.500 Z" fill="#ececec" stroke="#d06878" stroke-width="1.100"/></svg><svg style="left:600.5px;top:143px" width="29.5" height="28" viewBox="0 0 30 30" preserveAspectRatio="none"><path d="M12 2 Q4 2 5 8 Q6 13 13 13 Q5 14 5 20 Q6 27 14 26" fill="none" stroke="#404040" stroke-width="1.6"/><path d="M16 26 L16 10 Q16 4 22 5 L28 5" fill="none" stroke="#606060" stroke-width="1.5"/><path d="M4 25 L22 22" stroke="#d03030" stroke-width="1.3"/><path d="M12 11 L18 11 L18 18 L15 22 L12 18 Z" fill="#f0a030" stroke="#c05010" stroke-width="0.6"/><path d="M10 12 L10 26" stroke="#c050c0" stroke-width="0.8" stroke-dasharray="1.500 1.500"/></svg><svg style="left:635.5px;top:142px" width="29.5" height="29" viewBox="0 0 30 30" preserveAspectRatio="none"><path d="M1 18 L14 10 L29 17 L16 27 Z" fill="#e4eefc" stroke="#3068c8" stroke-width="0.9"/><path d="M7 20 Q14 12 24 17" fill="none" stroke="#d03030" stroke-width="2.600"/><path d="M4 2 L24 7" stroke="#1828b0" stroke-width="2.800"/><path d="M14 5 L14 12" stroke="#d02020" stroke-width="1.600"/><path d="M11 11 L14 16 L17 11 Z" fill="#d02020"/></svg><svg style="left:672px;top:143px" width="29" height="28" viewBox="0 0 30 30" preserveAspectRatio="none"><path d="M2 6 L8 2 L8 26 L2 24 Z" fill="#fff" stroke="#909090" stroke-width="0.8"/><path d="M8 5 L14 2 L14 28 L8 26 Z" fill="#f8e860" stroke="#c0a818" stroke-width="0.7"/><path d="M14 8 L28 10 L28 26 L14 24 Z" fill="#fafafa" stroke="#909090" stroke-width="0.8"/><path d="M14 3 L20 6 L20 14 L14 12 Z" fill="#f8f090" stroke="#c0a818" stroke-width="0.6"/><circle cx="21" cy="19" r="2.600" fill="none" stroke="#d03030" stroke-width="1"/><circle cx="6" cy="17" r="2" fill="none" stroke="#d03030" stroke-width="0.9"/><path d="M8 20 L14 22" stroke="#4060c0" stroke-width="1"/></svg><svg style="left:707px;top:142px" width="30" height="29" viewBox="0 0 30 30" preserveAspectRatio="none"><path d="M10 2 L22 8 L22 28 L10 22 Z" fill="#c8dcf8" fill-opacity="0.85" stroke="#3068c8" stroke-width="0.8"/><path d="M1 14 L14 8 L29 16 L15 24 Z" fill="#e8f0fc" fill-opacity="0.9" stroke="#3068c8" stroke-width="0.8"/><path d="M10 12 Q16 12 22 22" fill="none" stroke="#d03030" stroke-width="2.600"/></svg><div class="dds" style="left:740.5px;top:166.5px"></div><div class="sep" style="left:749px;top:141px;height:32px"></div><div class="grip" style="left:754.5px;top:144px;height:27px"></div><svg style="left:762px;top:143px" width="30" height="28" viewBox="0 0 30 30" preserveAspectRatio="none"><path d="M2 6 Q15 1 28 5 Q24 16 25 28 Q16 19 7 18 Q6 11 2 6 Z" fill="url(#gBh)" stroke="#4870d0" stroke-width="0.8"/><path d="M25 28 L25 30 Q16 21 7 20 L7 18 Q16 19 25 28 Z" fill="#3c70d8"/><path d="M10.500 3.800 Q13 12 13 19.500 M19 3.300 Q19 13 19.500 23" fill="none" stroke="#4870d0" stroke-width="0.9"/></svg><svg style="left:797px;top:143px" width="30" height="28" viewBox="0 0 30 30" preserveAspectRatio="none"><path d="M2 6 Q15 1 28 5 Q24 16 25 28 Q16 19 7 18 Q6 11 2 6 Z" fill="url(#gBh)" stroke="#4870d0" stroke-width="0.8"/><path d="M25 28 L25 30 Q16 21 7 20 L7 18 Q16 19 25 28 Z" fill="#3c70d8"/><path d="M10.500 3.800 Q13 12 13 19.500 M19 3.300 Q19 13 19.500 23" fill="none" stroke="#4870d0" stroke-width="0.9"/><path d="M4 10 Q15 6 26.500 9.500 M5.500 14.500 Q15 11 25.500 15.500" fill="none" stroke="#4870d0" stroke-width="0.9"/></svg><svg style="left:832px;top:142px" width="30" height="30" viewBox="0 0 30 30" preserveAspectRatio="none"><circle cx="14" cy="7" r="6" fill="none" stroke="#202020" stroke-width="1.3"/><path d="M14 7 L18 3" stroke="#30a030" stroke-width="1.4"/><circle cx="14" cy="7" r="1.300" fill="#30a030"/><path d="M2 22 Q8 16 12 22 Q13 26 14 29" fill="none" stroke="#303030" stroke-width="1.1"/><circle cx="2" cy="22" r="1.600" fill="#d02020"/><circle cx="14" cy="29" r="1.600" fill="#d02020"/><circle cx="7" cy="18.500" r="1.600" fill="#d02020"/><path d="M5 26 L10 24 L9 29 Z" fill="#30a030"/><path d="M16 20 L26 14 L29 16 L19 23 Z" fill="#e8d8f0" stroke="#3838a0" stroke-width="0.9"/><path d="M16 20 L19 23 L19 26 L16 23 Z" fill="#6060c0" stroke="#3838a0" stroke-width="0.6"/><path d="M19 23 L29 16 L29 19 L19 26 Z" fill="#b0a0d8" stroke="#3838a0" stroke-width="0.6"/></svg><svg style="left:868px;top:143px" width="29" height="28" viewBox="0 0 30 30" preserveAspectRatio="none"><path d="M2 6 Q15 1 28 5 Q24 16 25 28 Q16 19 7 18 Q6 11 2 6 Z" fill="url(#gBh)" stroke="#4870d0" stroke-width="0.8"/><path d="M25 28 L25 30 Q16 21 7 20 L7 18 Q16 19 25 28 Z" fill="#3c70d8"/><path d="M9 9 Q15 6 20 9 Q22 14 19 18 Q14 16 10 18 Q7 14 9 9 Z" fill="#c8dcf4" stroke="#183070" stroke-width="1.600"/></svg><svg style="left:900.5px;top:143px" width="29.5" height="28" viewBox="0 0 30 30" preserveAspectRatio="none"><path d="M3 12 Q12 4 20 4 Q26 14 26 22 Q16 22 9 28 Q8 18 3 12 Z" fill="#fdf8f0" stroke="#e06030" stroke-width="1"/><path d="M8 9 Q14 16 14 25 M14 6 Q20 14 20 22.500 M5 16 Q14 10 23 10 M7.500 22 Q16 16 25.500 16" fill="none" stroke="#a0a0a0" stroke-width="0.8"/><path d="M3 8 L9 2 L10 8 Z M22 28 L28 22 L21 22 Z" fill="#f09020"/><path d="M6 5 L9 8 M25 25 L22 22" stroke="#f09020" stroke-width="2.200"/></svg><svg style="left:936.5px;top:143px" width="30.5" height="28" viewBox="0 0 30 30" preserveAspectRatio="none"><path d="M4 18 Q8 6 16 4 L24 6 Q14 10 10 24 Z" fill="#fff" stroke="#d05040" stroke-width="1"/><path d="M16 4 L24 6 L20 14 Q14 12 12 16 Z" fill="#f0f0f8" stroke="#d05040" stroke-width="0.8"/><path d="M10 24 Q14 12 28 14 L28 17 Q16 16 12 28 Z" fill="#a8c8f4" stroke="#3060c8" stroke-width="0.8"/><path d="M3 26 Q14 14 28 20" fill="none" stroke="#3060c8" stroke-width="1.200"/></svg><svg style="left:973px;top:143px" width="31" height="28" viewBox="0 0 30 30" preserveAspectRatio="none"><path d="M2 8 Q10 2 16 8 Q22 14 28 8 L28 18 Q22 24 16 18 Q10 12 4 18 Z" fill="url(#gG)" stroke="#707070" stroke-width="0.8"/><path d="M4 18 Q10 12 16 18 Q22 24 28 18 L26 22 Q20 26 14 22 Q10 18 6 22 Z" fill="#e8e8e8" stroke="#707070" stroke-width="0.6"/><path d="M5 21 Q10 29 18 27 M6 25 L18 23 M9 20 L12 29 M13 21 L16 28" fill="none" stroke="#2838c0" stroke-width="0.9"/></svg><div class="dd" style="left:1007.5px;top:154.7px"></div><svg style="left:1019px;top:143px" width="30" height="28" viewBox="0 0 30 30" preserveAspectRatio="none"><path d="M2 24 L7 8 L25 8 L29 24 Z" fill="#e8ece8" stroke="#606860" stroke-width="1.100"/><path d="M8 21 L8 17 L14 17 Q15 11 20 11 L23 11 L23 21 Z" fill="#fff" stroke="#505850" stroke-width="1"/><circle cx="19" cy="15.500" r="1.800" fill="none" stroke="#505850" stroke-width="0.9"/></svg><div class="t hei" style="left:1055px;top:150px;font-size:14px;color:#111;">中面(<u>M</u>)</div><div class="dd" style="left:1106.5px;top:155.7px"></div><div class="dds" style="left:1116.5px;top:166.5px"></div><div class="sep" style="left:1126px;top:141px;height:32px"></div><div class="grip" style="left:1130.5px;top:144px;height:27px"></div><svg style="left:1137.5px;top:141.5px" width="28" height="30" viewBox="0 0 30 30" preserveAspectRatio="none"><rect x="1" y="1" width="28" height="28" fill="#101010"/><g fill="#e8e8e8"><rect x="2.500" y="3" width="2.500" height="3"/><rect x="2.500" y="9" width="2.500" height="3"/><rect x="2.500" y="15" width="2.500" height="3"/><rect x="2.500" y="21" width="2.500" height="3"/><rect x="25" y="3" width="2.500" height="3"/><rect x="25" y="9" width="2.500" height="3"/><rect x="25" y="15" width="2.500" height="3"/><rect x="25" y="21" width="2.500" height="3"/></g><rect x="6.500" y="4" width="17" height="20" fill="#e8e8e8"/><circle cx="15" cy="14" r="6.500" fill="url(#gRed)"/></svg><svg style="left:1173px;top:141.5px" width="27.5" height="30" viewBox="0 0 30 30" preserveAspectRatio="none"><rect x="1" y="1" width="28" height="28" fill="#8c8c8c"/><g fill="#b4b4b4"><rect x="2.500" y="3" width="2.500" height="3"/><rect x="2.500" y="9" width="2.500" height="3"/><rect x="2.500" y="15" width="2.500" height="3"/><rect x="2.500" y="21" width="2.500" height="3"/><rect x="25" y="3" width="2.500" height="3"/><rect x="25" y="9" width="2.500" height="3"/><rect x="25" y="15" width="2.500" height="3"/><rect x="25" y="21" width="2.500" height="3"/></g><rect x="6.500" y="4" width="17" height="20" fill="#b4b4b4"/><rect x="10" y="8" width="3.500" height="12" fill="#a08888"/><rect x="16.500" y="8" width="3.500" height="12" fill="#a08888"/></svg><svg style="left:1208.5px;top:141.5px" width="27.5" height="30" viewBox="0 0 30 30" preserveAspectRatio="none"><rect x="1" y="1" width="28" height="28" fill="#8c8c8c"/><g fill="#b4b4b4"><rect x="2.500" y="3" width="2.500" height="3"/><rect x="2.500" y="9" width="2.500" height="3"/><rect x="2.500" y="15" width="2.500" height="3"/><rect x="2.500" y="21" width="2.500" height="3"/><rect x="25" y="3" width="2.500" height="3"/><rect x="25" y="9" width="2.500" height="3"/><rect x="25" y="15" width="2.500" height="3"/><rect x="25" y="21" width="2.500" height="3"/></g><rect x="6.500" y="4" width="17" height="20" fill="#b4b4b4"/><rect x="9.500" y="8.500" width="11" height="11" fill="#a88c84"/></svg><div class="a" style="left:9px;top:180.5px;width:160.5px;height:20px;background:#fff;border:1px solid #8a8a8a;border-radius:3px;box-shadow:inset 1px 1px 1px #c8c8c8"></div><div class="a" style="left:150.5px;top:180.5px;width:19px;height:20px;background:linear-gradient(to bottom,#d8eafa 0,#7ab0e6 45%,#4a8ad6 55%,#a8d0f4 100%);border:1px solid #5a88c0;border-radius:3px"></div><div class="a" style="left:154.5px;top:188px;width:0;height:0;border-left:5.500px solid transparent;border-right:5.500px solid transparent;border-top:6px solid #101820"></div><div class="t song" style="left:12px;top:182.5px;font-size:15px;color:#1c241c;letter-spacing:-0.400px">没有选择过滤器</div><div class="a" style="left:177px;top:180.5px;width:169px;height:20px;background:#fff;border:1px solid #8a8a8a;border-radius:3px;box-shadow:inset 1px 1px 1px #c8c8c8"></div><div class="a" style="left:327px;top:180.5px;width:19px;height:20px;background:linear-gradient(to bottom,#d8eafa 0,#7ab0e6 45%,#4a8ad6 55%,#a8d0f4 100%);border:1px solid #5a88c0;border-radius:3px"></div><div class="a" style="left:331px;top:188px;width:0;height:0;border-left:5.500px solid transparent;border-right:5.500px solid transparent;border-top:6px solid #101820"></div><div class="t song" style="left:181px;top:182.5px;font-size:15px;color:#1c241c;letter-spacing:-0.400px">整个装配</div><svg style="left:354px;top:179px" width="22" height="23" viewBox="0 0 24 24" preserveAspectRatio="none"><path d="M3 8 L10 5 L10 20 L3 23 Z M10 5 L17 8 L17 22 L10 20" fill="#b8b8b8" stroke="#9a9a9a" stroke-width="0.8"/><circle cx="15" cy="8" r="4" fill="none" stroke="#9a9a9a" stroke-width="2.200"/><circle cx="18" cy="14" r="4" fill="none" stroke="#9a9a9a" stroke-width="2.200"/></svg><div class="sep" style="left:380.5px;top:179px;height:24px"></div><div class="hl" style="left:387px;top:180px;width:22.5px;height:21.5px;background:#f3dede;border:1.5px solid #cc6666;border-radius:0"></div><svg style="left:388.5px;top:181px" width="20.5" height="20.5" viewBox="0 0 24 24" preserveAspectRatio="none"><circle cx="9" cy="9" r="4.500" fill="none" stroke="#202020" stroke-width="1"/><path d="M9 1 L9 17 M1 9 L17 9" stroke="#202020" stroke-width="1.100"/><circle cx="9" cy="9" r="1.500" fill="#e03030"/><path d="M10 12 L23 12 L18 17 L18 22 L15 22 L15 17 Z" fill="#f8d030" stroke="#a08010" stroke-width="0.7"/></svg><div class="dd" style="left:411.5px;top:189.7px"></div><svg style="left:423px;top:181px" width="18" height="19" viewBox="0 0 24 24" preserveAspectRatio="none"><path d="M20 4 Q22 16 8 16" fill="none" stroke="#88aaa8" stroke-width="3.600"/><path d="M1 16 L10 9 L10 23 Z" fill="#88aaa8"/></svg><svg style="left:450px;top:180px" width="23" height="22" viewBox="0 0 24 24" preserveAspectRatio="none"><path d="M2 10 L10 4 L22 6 L22 16 L14 22 L2 20 Z" fill="#f4f4f8" stroke="#5060a0" stroke-width="0.9"/><path d="M2 10 L14 12 L22 6 M14 12 L14 22" fill="none" stroke="#5060a0" stroke-width="0.9"/><path d="M5 8.500 L15 10" stroke="#e03030" stroke-width="2"/><path d="M14 12 L22 6 L22 16 L14 22 Z" fill="#dcdce8"/></svg><svg style="left:479px;top:179px" width="22" height="23" viewBox="0 0 24 24" preserveAspectRatio="none"><path d="M4 10 Q6 3 13 5" fill="none" stroke="#a8a8a8" stroke-width="2.200"/><path d="M1 6 L7 13 L8 6 Z" fill="#a8a8a8"/><circle cx="15" cy="16" r="4.500" fill="none" stroke="#c09090" stroke-width="1"/><path d="M15 9 L15 23 M8 16 L22 16" stroke="#c09090" stroke-width="1"/></svg><svg style="left:507px;top:179px" width="23" height="23" viewBox="0 0 24 24" preserveAspectRatio="none"><path d="M2 5 Q8 2 12 8 Q14 12 18 12" fill="none" stroke="#a8a8a8" stroke-width="3.200"/><circle cx="16" cy="13" r="2.500" fill="#a8a8a8"/><path d="M17 17 L22 17 L22 23 L17 23 Z M18.500 17v6M20.500 17v6" fill="none" stroke="#b0b0b0" stroke-width="1"/></svg><div class="sep" style="left:534.5px;top:179px;height:24px"></div><svg style="left:540px;top:180px" width="22" height="21" viewBox="0 0 24 24" preserveAspectRatio="none"><rect x="2.500" y="4" width="18" height="15" fill="none" stroke="#808080" stroke-width="1.300" stroke-dasharray="2 1.500"/><circle cx="20.500" cy="19" r="1.600" fill="#808080"/></svg><div class="dd" style="left:568.5px;top:189.7px"></div><div class="sep" style="left:577px;top:179px;height:24px"></div><div class="hl" style="left:581.5px;top:177.3px;width:28px;height:26.7px;"></div><svg style="left:584px;top:179.5px" width="24" height="23.5" viewBox="0 0 24 24" preserveAspectRatio="none"><path d="M1 2 L7 6 L1 10 Z" fill="#20a030"/><path d="M1 13 L7 17 L1 22 Z" fill="#d02020"/><path d="M14 4 L22 12 L14 20 L7 12 Z" fill="#f8e860" stroke="#404040" stroke-width="0.8"/><g fill="#fff" stroke="#303030" stroke-width="0.8"><circle cx="14" cy="4" r="2.200"/><circle cx="22" cy="12" r="2.200"/><circle cx="14" cy="20" r="2.200"/><circle cx="7" cy="12" r="2.200"/></g><circle cx="14" cy="12" r="1.600" fill="#f0c020"/></svg><svg style="left:611px;top:178px" width="24" height="26" viewBox="0 0 24 24" preserveAspectRatio="none"><path d="M9 2 L16 9 L9 16 L2 9 Z" fill="#f8e860" stroke="#404040" stroke-width="0.8"/><g fill="#fff" stroke="#303030" stroke-width="0.8"><circle cx="9" cy="2.500" r="2"/><circle cx="16" cy="9" r="2"/><circle cx="9" cy="16" r="2"/><circle cx="2.500" cy="9" r="2"/></g><path d="M21 11 Q23 20 12 20" fill="none" stroke="#2890a8" stroke-width="3.200"/><path d="M7 20 L14 15 L14 24 Z" fill="#2890a8"/></svg><svg style="left:640px;top:179px" width="22" height="23" viewBox="0 0 24 24" preserveAspectRatio="none"><path d="M3 21 L20 4" stroke="#202020" stroke-width="1.300"/><circle cx="20" cy="4" r="2" fill="#d02020"/></svg><svg style="left:669px;top:179px" width="21" height="23" viewBox="0 0 24 24" preserveAspectRatio="none"><path d="M3 21 L21 3" stroke="#202020" stroke-width="1.300"/><circle cx="12" cy="12" r="2" fill="#d02020"/></svg><div class="hl" style="left:694px;top:177.3px;width:27.5px;height:26.5px;"></div><svg style="left:696px;top:179.5px" width="24" height="24" viewBox="0 0 24 24" preserveAspectRatio="none"><path d="M4 4 Q12 3 12 12 Q12 21 20 20" fill="none" stroke="#202020" stroke-width="1.500"/><circle cx="12" cy="12" r="1.600" fill="#d02020"/></svg><div class="hl" style="left:722.5px;top:177.3px;width:27.5px;height:26.5px;"></div><svg style="left:724.5px;top:179.5px" width="24" height="24" viewBox="0 0 24 24" preserveAspectRatio="none"><path d="M12 2 L12 22 M2 18 Q12 6 22 18" fill="none" stroke="#202020" stroke-width="1.500"/><circle cx="12" cy="12.300" r="1.600" fill="#d02020"/></svg><div class="hl" style="left:750.5px;top:177.3px;width:27.5px;height:26.5px;"></div><svg style="left:752px;top:179.5px" width="24" height="24" viewBox="0 0 24 24" preserveAspectRatio="none"><circle cx="12" cy="12" r="8.500" fill="none" stroke="#202020" stroke-width="1.500"/><circle cx="12" cy="12" r="1.500" fill="#d02020"/></svg><svg style="left:782px;top:180px" width="20" height="22" viewBox="0 0 24 24" preserveAspectRatio="none"><path d="M2 12 L22 12" stroke="#202020" stroke-width="1.500"/><path d="M12 3 L12 21" stroke="#d02020" stroke-width="1.500"/></svg><div class="hl" style="left:806px;top:177.3px;width:28.5px;height:26.5px;"></div><svg style="left:808px;top:179.5px" width="24" height="24" viewBox="0 0 24 24" preserveAspectRatio="none"><path d="M3 5 L21 20" stroke="#202020" stroke-width="1.400"/><path d="M3 21 Q10 18 15 14" fill="none" stroke="#202020" stroke-width="1.400"/><circle cx="15" cy="14.800" r="1.700" fill="#d02020"/></svg><svg style="left:836px;top:179px" width="22" height="23" viewBox="0 0 24 24" preserveAspectRatio="none"><path d="M3 22 L11 5 L22 11" fill="none" stroke="#202020" stroke-width="1.300"/><circle cx="11" cy="5" r="1.800" fill="#d02020"/></svg><svg style="left:864px;top:179px" width="22" height="23" viewBox="0 0 24 24" preserveAspectRatio="none"><path d="M4 8 L16 8 M10 2 L10 14" stroke="#a8a8a8" stroke-width="1.400"/><path d="M4 16 Q4 21 9 20" fill="none" stroke="#d0b0a8" stroke-width="1.600"/><path d="M14 22h2M18 22h2M22 22h2" stroke="#a8a8a8" stroke-width="1.600"/></svg><div class="sep" style="left:891.5px;top:179px;height:24px"></div><svg style="left:899px;top:181px" width="20" height="20" viewBox="0 0 24 24" preserveAspectRatio="none"><path d="M1 6 Q8 6 10 12 L14 16" fill="none" stroke="#a8a8a8" stroke-width="1.800"/><path d="M16 18 L10 16 L15 12 Z" fill="#a8a8a8"/></svg><div class="dd" style="left:921.5px;top:189.7px"></div><svg style="left:934px;top:180px" width="22" height="22" viewBox="0 0 24 24" preserveAspectRatio="none"><path d="M2 18 L8 22 L14 16" fill="none" stroke="#b0b0b0" stroke-width="1.500"/><path d="M13 2 L18 2 L14 8 L18 8 L8 18 L11 10 L8 10 Z" fill="#b0b0b0"/></svg><div class="dd" style="left:956.5px;top:189.7px"></div><svg style="left:969px;top:180px" width="21" height="22" viewBox="0 0 24 24" preserveAspectRatio="none"><path d="M2 6 L8 4 L10 10 L14 8 L18 16" fill="none" stroke="#b0b0b0" stroke-width="2.200"/><path d="M20 20 L13 17 L19 13 Z" fill="#a8a8a8"/></svg><div class="hl" style="left:993.5px;top:177.5px;width:28px;height:27px;"></div><svg style="left:995px;top:179px" width="24" height="24" viewBox="0 0 24 24" preserveAspectRatio="none"><ellipse cx="6.500" cy="6" rx="3" ry="4" fill="none" stroke="#c0a820" stroke-width="1.600"/><ellipse cx="8" cy="12" rx="3" ry="4" fill="none" stroke="#c0a820" stroke-width="1.600"/><circle cx="4" cy="21" r="1.500" fill="#d02020"/></svg><div class="t song" style="left:1002px;top:180px;font-size:24px;color:#111;font-weight:bold;color:#000">A</div><svg style="left:1024.5px;top:178.5px" width="22" height="24.5" viewBox="0 0 24 24" preserveAspectRatio="none"><path d="M1 11 L21 11" stroke="#303030" stroke-width="1" stroke-dasharray="1.500 1.500"/><path d="M11 1 L11 23" stroke="#3030c0" stroke-width="1" stroke-dasharray="1.500 1.500"/><path d="M6 8 L16 14 M16 8 L6 14" stroke="#d02020" stroke-width="1.300"/><circle cx="11" cy="11" r="2.200" fill="#d02020"/></svg><div class="dd" style="left:1048px;top:189.7px"></div><div class="t song" style="left:1064px;top:181px;font-size:24px;color:#111;color:#a0a0a0">A</div><div class="a" style="left:1061px;top:198px;width:3px;height:3px;border-radius:2px;background:#c09090"></div><div class="hl" style="left:1085.5px;top:177.5px;width:34px;height:26px;background:linear-gradient(to bottom,#c4c8d4,#e0e2ea);border-color:#6a6a72;border-radius:2px"></div><svg style="left:1089px;top:180px" width="21.5" height="21.5" viewBox="0 0 24 24" preserveAspectRatio="none"><rect x="1" y="1" width="22" height="22" fill="#f4f4fa" stroke="#5060b0" stroke-width="1.200"/><rect x="1" y="1" width="22" height="3" fill="#6878c8"/><path d="M4 7 L4 20 L12 20" fill="none" stroke="#2030b0" stroke-width="1.100"/><path d="M4 20 L4 13 M4 20 L10 20" stroke="#d02020" stroke-width="1.100"/><path d="M9 8 L19 5 L21 15 L11 18 Z" fill="#f8e860" stroke="#a09020" stroke-width="0.8"/></svg><div class="dd" style="left:1112px;top:189.7px"></div><svg style="left:1122px;top:179px" width="23" height="23" viewBox="0 0 24 24" preserveAspectRatio="none"><path d="M2 7 L10 2 L22 5 L22 17 L13 23 L2 19 Z" fill="#58a8f0" stroke="#2060c0" stroke-width="0.9"/><path d="M4 8 L10 4.500 L20 7 L13 10.500 Z" fill="#f4f8ff"/><path d="M2 7 L13 11 L22 5 M13 11 L13 23" fill="none" stroke="#2060c0" stroke-width="0.9"/><path d="M9 4 L9 14 L16 16" fill="none" stroke="#d03030" stroke-width="0.9"/></svg>
<div class="a" style="left:384px;top:229px;width:857px;height:653px;background:linear-gradient(to bottom,#b6b7b7 0,#c7c8c8 25%,#d7d8d9 50%,#e4e5e7 75%,#ecedef 100%)"></div>
<div class="a" style="left:383px;top:229px;width:1.5px;height:645px;background:#848484"></div>
<svg style="left:0;top:0" width="1241" height="882" viewBox="0 0 1241 882"><polygon points="828.500,389.500 1052,499 787.300,590 563.500,482.500" fill="#fdc101" stroke="#4a3800" stroke-width="0.8"/><polygon points="563.500,482.500 787.300,590 787.300,910 720.500,875 563.500,799" fill="#b46f00" stroke="#3a2a00" stroke-width="0.8"/><polygon points="787.300,590 1052,499 1052,817.500 787.300,910" fill="#d28100" stroke="#3a2a00" stroke-width="0.8"/><g fill="none" stroke-width="1.100"><path d="M563 742.600 L609 727.200 L609 782 L563 798.400" stroke="#f0dc9c"/><path d="M563 798.400 L609 782 L648 801.500 L602.600 817.300" stroke="#f0dc9c"/><path d="M609 782 L646 770" stroke="#f0dc9c"/><path d="M563 742.600 L601.400 762" stroke="#302890" stroke-dasharray="1.500 1"/><path d="M601.400 762 L601.400 817.300" stroke="#b05868"/><path d="M562.500 798.400 L562.500 700" stroke="#3444b4" stroke-width="0.9"/><path d="M563 798.400 L632 832.500" stroke="#2030b0" stroke-dasharray="1.500 1"/><path d="M558.500 798.400 h8 M562.500 794.500 v8" stroke="#2030b0"/></g><path d="M562.500 689 L565 702 L560 702 Z" fill="#1828c0"/><path d="M640 837 L628 834.500 L631 829.500 Z" fill="#1828c0"/><path d="M654 768 L642 766.500 L643.500 772.500 Z" fill="#f4f0e4"/><text x="559" y="688" font-family="Liberation Sans, sans-serif" font-size="9" fill="#8898c8">Z</text><text x="656" y="770" font-family="Liberation Sans, sans-serif" font-size="10" fill="#f0dc9c">Y</text><text x="641" y="843" font-family="Liberation Sans, sans-serif" font-size="9" fill="#3848c0">X</text><path d="M440.500 802 L453 795 L466.500 800 L466.500 818 L454 825 L440.500 820 Z" fill="#c4c8c4" fill-opacity="0.55" stroke="#a8aca8" stroke-width="0.8"/><path d="M440.500 802 L454 807 L466.500 800 M454 807 L454 825" fill="none" stroke="#b4b8b4" stroke-width="0.8"/><path d="M436 820 L464 809" stroke="#90c890" stroke-width="1.600"/><path d="M436.500 819 L436.500 792" stroke="#1848c8" stroke-width="2.200"/><path d="M436.500 787 L439.500 794 L433.500 794 Z" fill="#1848c8"/><path d="M436 820 L456 829" stroke="#d83838" stroke-width="2.200"/><path d="M461 831.500 L453 831 L455.500 826 Z" fill="#d83838"/><circle cx="436" cy="820" r="3" fill="#d8d8d8" stroke="#a0a0a0" stroke-width="0.6"/><text x="433" y="787" font-family="Liberation Sans, sans-serif" font-size="9" fill="#2858c8">Z</text><text x="460" y="838" font-family="Liberation Sans, sans-serif" font-size="9" fill="#d84040">X</text><text x="465" y="812" font-family="Liberation Sans, sans-serif" font-size="9" fill="#70b870">Y</text></svg>
<div class="a" style="left:5.5px;top:229px;width:35.5px;height:645px;background:#b0b0b2"></div>
<div class="a" style="left:5.5px;top:229px;width:36px;height:1.2px;background:#f2f2f2"></div>
<div class="tab" style="top:244.0px;height:42.0px"></div>
<div class="tab" style="top:289.0px;height:43.0px"></div>
<div class="tab" style="top:333.0px;height:45.0px;background:#f0f0f0;width:32.5px;border-color:#b0b0b0"></div>
<div class="tab" style="top:380.0px;height:42.0px"></div>
<div class="tab" style="top:435.5px;height:43.0px"></div>
<div class="tab" style="top:492.0px;height:42.0px"></div>
<div class="tab" style="top:547.7px;height:41.9px"></div>
<div class="tab" style="top:592.6px;height:41.9px"></div>
<div class="tab" style="top:637.5px;height:43.5px"></div>
<div class="tab" style="top:683.0px;height:43.0px"></div>
<div class="tab" style="top:728.5px;height:42.5px"></div>
<div class="tab" style="top:773.5px;height:42.5px"></div>
<div class="a" style="left:40px;top:230px;width:1.2px;height:103.5px;background:#868686"></div>
<div class="a" style="left:40px;top:378px;width:1.2px;height:495px;background:#868686"></div>
<svg style="left:12px;top:251px" width="28" height="28" viewBox="0 0 30 30" preserveAspectRatio="none"><g fill="#f8e040" stroke="#b09010" stroke-width="0.7"><path d="M4 5 L9 3 L14 5 L14 11 L9 13 L4 11 Z"/><path d="M10 11 L15 9 L20 11 L20 17 L15 19 L10 17 Z"/><path d="M17 20 L22 18 L27 20 L27 26 L22 28 L17 26 Z"/></g><path d="M7 13 L7 27 M7 22 L16 22 M21 15 L29 15" fill="none" stroke="#3038a0" stroke-width="1.600"/></svg><svg style="left:12px;top:296.5px" width="28" height="28" viewBox="0 0 30 30" preserveAspectRatio="none"><path d="M9 3 L9 13 L15 8 Z M21 3 L21 13 L15 8 Z" fill="#1818d0"/><path d="M15 1 L15 28" stroke="#303030" stroke-width="1" stroke-dasharray="2 1.500"/><rect x="3" y="16" width="10" height="10" fill="#f8f020" stroke="#908800" stroke-width="1"/><path d="M17 15 L17 27 L29 27 Z" fill="#d81818" stroke="#801010" stroke-width="0.8"/></svg><svg style="left:12px;top:341.5px" width="28" height="28" viewBox="0 0 30 30" preserveAspectRatio="none"><path d="M3 7 L3 15 Q3 18 10 18 Q17 18 17 15 L17 7 Z" fill="#e090c8" stroke="#903070" stroke-width="1"/><ellipse cx="10" cy="7" rx="7" ry="3" fill="#f4c0e0" stroke="#903070" stroke-width="1"/><path d="M8 18 L8 29 M8 24 L15 24 M20 11 L28 11" fill="none" stroke="#3038a0" stroke-width="1.600"/><circle cx="21" cy="24" r="4.500" fill="#f4d8ec" stroke="#903070" stroke-width="1.200"/><circle cx="21" cy="24" r="1.600" fill="none" stroke="#903070" stroke-width="1"/></svg><svg style="left:12px;top:387px" width="28" height="28" viewBox="0 0 30 30" preserveAspectRatio="none"><path d="M2 9 L6 4 L12 4 L10 9 L10 27 L2 27 Z" fill="#f09828" stroke="#a05808" stroke-width="0.7"/><path d="M10 9 L14 4 L20 4 L18 9 L18 27 L10 27 Z" fill="#58c838" stroke="#287818" stroke-width="0.7"/><path d="M18 9 L22 4 L28 4 L28 22 L26 27 L18 27 Z" fill="#3898e8" stroke="#1858a8" stroke-width="0.7"/><path d="M3 13h6M3 16h6M11 13h6M11 16h6M19 13h6M19 16h6" stroke="#fff" stroke-opacity="0.6" stroke-width="1"/></svg><svg style="left:12px;top:443px" width="28" height="28" viewBox="0 0 30 30" preserveAspectRatio="none"><circle cx="12" cy="18" r="10" fill="#2878e0" stroke="#0c3890" stroke-width="1"/><text x="12" y="25" font-family="Liberation Serif, serif" font-weight="bold" font-size="19" text-anchor="middle" fill="#fff">i</text><path d="M12 4 Q24 4 26 17 M14 0 Q28 2 30 16" fill="none" stroke="#2858c8" stroke-width="2.200"/></svg><svg style="left:12px;top:499px" width="28" height="28" viewBox="0 0 30 30" preserveAspectRatio="none"><path d="M5 2 L19 2 L26 9 L26 28 L5 28 Z" fill="#fff" stroke="#7080a0" stroke-width="1.200"/><path d="M19 2 L19 9 L26 9 Z" fill="#c8d0e0" stroke="#7080a0" stroke-width="0.8"/><circle cx="15" cy="18" r="7" fill="#2a78d0"/><path d="M11 15 Q15 12 18 16 Q19 20 15 22 Q11 21 11 15 Z" fill="#48b048"/></svg><svg style="left:12px;top:554.65px" width="28" height="28" viewBox="0 0 30 30" preserveAspectRatio="none"><circle cx="15" cy="15" r="12.500" fill="#e8f0fa" stroke="#7080a0" stroke-width="1.600"/><circle cx="15" cy="15" r="9.500" fill="#fff" stroke="#a8b8d0" stroke-width="0.8"/><path d="M15 8 L15 15 L20 15" fill="none" stroke="#202020" stroke-width="1.800"/></svg><svg style="left:12px;top:599.55px" width="28" height="28" viewBox="0 0 30 30" preserveAspectRatio="none"><path d="M3 8 L9 5 L9 26 L3 28 Z" fill="#f0f0f0" stroke="#606060" stroke-width="0.9"/><rect x="9" y="5" width="18" height="21" fill="#fff" stroke="#606060" stroke-width="1"/><circle cx="14" cy="10" r="2" fill="#3878e0"/><circle cx="14" cy="15.500" r="2" fill="#40b040"/><circle cx="14" cy="21" r="2" fill="#e03030"/><path d="M18 10h6M18 15.500h6M18 21h6" stroke="#404040" stroke-width="1.300"/></svg><svg style="left:12px;top:645.25px" width="28" height="28" viewBox="0 0 30 30" preserveAspectRatio="none"><defs><linearGradient id="rb" x1="0" y1="0" x2="0" y2="1"><stop offset="0" stop-color="#f02010"/><stop offset="0.250" stop-color="#f8e020"/><stop offset="0.500" stop-color="#30d030"/><stop offset="0.750" stop-color="#20c0f0"/><stop offset="1" stop-color="#1828d0"/></linearGradient></defs><rect x="3" y="2" width="10" height="26" fill="url(#rb)"/><path d="M15 6 L26 26" stroke="#101010" stroke-width="2.800"/><path d="M13 3 L17 9" stroke="#e8e8e8" stroke-width="3"/></svg><svg style="left:12px;top:690.5px" width="28" height="28" viewBox="0 0 30 30" preserveAspectRatio="none"><path d="M6 2 L14 2 L14 20 L10 27 L6 20 Z" fill="#58a0e8" stroke="#2060b0" stroke-width="0.8"/><path d="M6 7 L14 5 M6 12 L14 10 M6 17 L14 15" stroke="#d8ecff" stroke-width="1.400"/><path d="M14 10 L28 8 L18 18 M16 12 L27 26" fill="none" stroke="#101010" stroke-width="2.200"/><path d="M3 27 L14 25" stroke="#40a040" stroke-width="1.200"/></svg><svg style="left:12px;top:735.75px" width="28" height="28" viewBox="0 0 30 30" preserveAspectRatio="none"><circle cx="10" cy="14" r="5" fill="#806040"/><path d="M2 27 Q2 19 10 19 Q18 19 18 27 Z" fill="#9848c0"/><circle cx="21" cy="8" r="5" fill="#f0b070"/><path d="M13 22 Q13 13 21 13 Q29 13 29 22 Z" fill="#40a840"/><circle cx="10" cy="14.500" r="3.500" fill="#f0c8a0"/></svg><svg style="left:12px;top:780.75px" width="28" height="28" viewBox="0 0 30 30" preserveAspectRatio="none"><path d="M3 8 L9 4 L9 25 L3 28 Z" fill="#f0f0f0" stroke="#606060" stroke-width="0.9"/><rect x="9" y="4" width="18" height="21" fill="#fff" stroke="#606060" stroke-width="1"/><rect x="12" y="7" width="12" height="13" fill="#c02828"/><path d="M14 8 L18 14 L22 8 Z" fill="#4060d0"/><rect x="15" y="14" width="6" height="5" fill="#f8f0e0"/></svg>
<div class="a" style="left:41px;top:229px;width:343px;height:647px;background:#f0f0f0"></div>
<div class="t song" style="left:80px;top:243.5px;font-size:15.5px;font-weight:bold;color:#000">部件导航器</div>
<svg style="left:56px;top:245px" width="12" height="12" viewBox="0 0 12 12"><ellipse cx="7" cy="5" rx="3.5" ry="2.6" fill="#e8e8d8" stroke="#111" stroke-width="1.4" transform="rotate(-25 7 5)"/><path d="M1 10 L4.5 7" stroke="#111" stroke-width="1.4"/></svg>
<div class="a" style="left:49px;top:267px;width:326px;height:519px;background:#fff;border:1px solid #9a9a9a"></div>
<div class="a" style="left:50px;top:308px;width:324px;height:20px;background:#f4f4f4;border-top:1px solid #ebebeb;border-bottom:1px solid #ebebeb"></div><div class="a" style="left:50px;top:348px;width:324px;height:20px;background:#f4f4f4;border-top:1px solid #ebebeb;border-bottom:1px solid #ebebeb"></div><div class="a" style="left:50px;top:388px;width:324px;height:20px;background:#f4f4f4;border-top:1px solid #ebebeb;border-bottom:1px solid #ebebeb"></div><div class="a" style="left:50px;top:428px;width:324px;height:20px;background:#f4f4f4;border-top:1px solid #ebebeb;border-bottom:1px solid #ebebeb"></div><div class="a" style="left:50px;top:468px;width:324px;height:20px;background:#f4f4f4;border-top:1px solid #ebebeb;border-bottom:1px solid #ebebeb"></div><div class="a" style="left:50px;top:508px;width:324px;height:20px;background:#f4f4f4;border-top:1px solid #ebebeb;border-bottom:1px solid #ebebeb"></div><div class="a" style="left:50px;top:548px;width:324px;height:20px;background:#f4f4f4;border-top:1px solid #ebebeb;border-bottom:1px solid #ebebeb"></div><div class="a" style="left:50px;top:588px;width:324px;height:20px;background:#f4f4f4;border-top:1px solid #ebebeb;border-bottom:1px solid #ebebeb"></div><div class="a" style="left:50px;top:628px;width:324px;height:20px;background:#f4f4f4;border-top:1px solid #ebebeb;border-bottom:1px solid #ebebeb"></div><div class="a" style="left:50px;top:668px;width:324px;height:20px;background:#f4f4f4;border-top:1px solid #ebebeb;border-bottom:1px solid #ebebeb"></div><div class="a" style="left:50px;top:708px;width:324px;height:20px;background:#f4f4f4;border-top:1px solid #ebebeb;border-bottom:1px solid #ebebeb"></div><div class="a" style="left:50px;top:748px;width:324px;height:20px;background:#f4f4f4;border-top:1px solid #ebebeb;border-bottom:1px solid #ebebeb"></div>
<div class="a" style="left:50px;top:268px;width:324px;height:20px;background:linear-gradient(to bottom,#fafafa,#e4e4e4 60%,#d6d6d6);border-bottom:1px solid #c4c4c4"></div>
<div class="a" style="left:231px;top:268px;width:1px;height:517px;background:#e0e0e0"></div>
<div class="a" style="left:321px;top:268px;width:1px;height:517px;background:#e0e0e0"></div>
<div class="t song" style="left:56px;top:270px;font-size:15px;color:#222">名称</div>
<div class="a" style="left:102px;top:275px;width:0;height:0;border-left:4.5px solid transparent;border-right:4.5px solid transparent;border-bottom:5px solid #222"></div>
<div class="t song" style="left:237px;top:270px;font-size:15px;color:#222">附注</div>
<div class="t song2" style="left:85px;top:291.5px;font-size:14.5px;color:#333">历史记录模式</div>
<div class="t song2" style="left:85px;top:311.5px;font-size:14.5px;color:#333">模型视图</div>
<div class="t song2" style="left:100px;top:331.5px;font-size:14.5px;color:#333">摄像机</div>
<div class="t song2" style="left:85px;top:351.5px;font-size:14.5px;color:#333">模型历史记录</div>
<div class="t song2" style="left:116px;top:371.5px;font-size:14.5px;color:#333">基准坐标系 (0)</div>
<div class="t song2" style="left:116px;top:391.5px;font-size:14.5px;color:#333">块 (1)</div>
<div class="a" style="left:59px;top:298px;width:1px;height:61px;border-left:1px dotted #b4b4b4"></div><div class="a" style="left:60px;top:298px;width:9px;height:1px;border-top:1px dotted #b4b4b4"></div><div class="a" style="left:77px;top:368px;width:1px;height:31px;border-left:1px dotted #b4b4b4"></div><div class="a" style="left:78px;top:378px;width:8px;height:1px;border-top:1px dotted #b4b4b4"></div><div class="a" style="left:78px;top:398px;width:8px;height:1px;border-top:1px dotted #b4b4b4"></div><svg style="left:55px;top:313px" width="9" height="9" viewBox="0 0 9 9"><circle cx="4.500" cy="4.500" r="4" fill="#fff" stroke="#808080" stroke-width="0.9"/><path d="M2.300 4.500h4.400 M4.500 2.300v4.400" stroke="#303030" stroke-width="1"/></svg><svg style="left:55px;top:333px" width="9" height="9" viewBox="0 0 9 9"><circle cx="4.500" cy="4.500" r="4" fill="#fff" stroke="#808080" stroke-width="0.9"/><path d="M2.300 4.500h4.400 M4.500 2.300v4.400" stroke="#303030" stroke-width="1"/></svg><svg style="left:55px;top:353px" width="9" height="9" viewBox="0 0 9 9"><circle cx="4.500" cy="4.500" r="4" fill="#fff" stroke="#808080" stroke-width="0.9"/><path d="M2.300 4.500h4.400" stroke="#303030" stroke-width="1"/></svg><svg style="left:68px;top:291px" width="15" height="15" viewBox="0 0 30 30" preserveAspectRatio="none"><circle cx="15" cy="15" r="12.500" fill="#dce4f4" stroke="#606880" stroke-width="3"/><path d="M15 7 L15 16 L21 16" fill="none" stroke="#202020" stroke-width="3"/></svg><svg style="left:67px;top:310px" width="18" height="17" viewBox="0 0 30 30" preserveAspectRatio="none"><path d="M13 2 L24 8 L24 20 L13 26 L2 20 L2 8 Z" fill="#e0f4e8" stroke="#20a060" stroke-width="2.400"/><path d="M2 8 L13 14 L24 8 M13 14 L13 26" fill="none" stroke="#20a060" stroke-width="2"/><path d="M16 27 L29 23" stroke="#e03020" stroke-width="2.400"/><path d="M24 19 L30 23 L25 28 Z" fill="#e03020"/></svg><svg style="left:68px;top:332px" width="14" height="14" viewBox="0 0 30 30" preserveAspectRatio="none"><path d="M3 16 L11 24 L27 4" fill="none" stroke="#28a838" stroke-width="6"/></svg><svg style="left:84px;top:330px" width="15" height="17" viewBox="0 0 30 30" preserveAspectRatio="none"><path d="M3 10 L20 3 L27 18 L10 27 Z" fill="#e8d0e8" stroke="#a04090" stroke-width="2"/><path d="M10 12 L19 8 L22 16 L13 20 Z" fill="#7080d0"/><path d="M22 6 L29 10 L27 18" fill="#9060b0"/></svg><svg style="left:66px;top:351px" width="18" height="16" viewBox="0 0 30 30" preserveAspectRatio="none"><path d="M2 8 L2 26 L22 26 L22 8 L12 8 L10 4 L3 4 Z" fill="#e8b830" stroke="#906808" stroke-width="1.600"/><path d="M2 26 L8 13 L29 13 L22 26 Z" fill="#fce890" stroke="#906808" stroke-width="1.600"/></svg><svg style="left:86.500px;top:371.5px" width="12" height="12" viewBox="0 0 12 12"><rect x="0.700" y="0.700" width="10.600" height="10.600" fill="#fff" stroke="#303030" stroke-width="1.400"/><path d="M2.500 6 L5 9 L10 2.500" fill="none" stroke="#20a030" stroke-width="2.200"/></svg><svg style="left:86.500px;top:391.5px" width="12" height="12" viewBox="0 0 12 12"><rect x="0.700" y="0.700" width="10.600" height="10.600" fill="#fff" stroke="#303030" stroke-width="1.400"/><path d="M2.500 6 L5 9 L10 2.500" fill="none" stroke="#20a030" stroke-width="2.200"/></svg><svg style="left:100px;top:371px" width="14" height="15" viewBox="0 0 30 30" preserveAspectRatio="none"><path d="M5 3 L5 20 L20 27" fill="none" stroke="#303030" stroke-width="2.400"/><path d="M5 14 L18 8 L26 14 L14 20 Z" fill="none" stroke="#707070" stroke-width="1.800"/><path d="M10 20 L26 12" stroke="#d03030" stroke-width="2"/><path d="M20 6 L28 10" stroke="#30a040" stroke-width="2"/></svg><svg style="left:100px;top:391px" width="15" height="15" viewBox="0 0 30 30" preserveAspectRatio="none"><path d="M2 9 L14 3 L28 8 L16 14 Z" fill="#e8f4ff" stroke="#3068c8" stroke-width="1"/><path d="M2 9 L16 14 L16 28 L2 22 Z" fill="#7ab0f0" stroke="#3068c8" stroke-width="1"/><path d="M16 14 L28 8 L28 22 L16 28 Z" fill="#2c68d8" stroke="#2458b8" stroke-width="1"/></svg>
<div class="a" style="left:49px;top:788px;width:326px;height:1px;background:#dcdcdc"></div>
<div class="a" style="left:183px;top:788px;width:58px;height:5px;background:#cfcfcf;border:1px solid #bdbdbd"></div>
<div class="a" style="left:49px;top:796.0px;width:326px;height:24px;background:linear-gradient(to bottom,#f6f6f6,#e6e6e6 60%,#d2d2d2);border-bottom:1px solid #bbb"></div>
<div class="a" style="left:349px;top:798.0px;width:1px;height:20px;background:#c8c8c8"></div>
<div class="t song" style="left:56px;top:800.0px;font-size:15px;font-weight:bold;color:#000">相依性</div>
<svg style="left:356px;top:803.0px" width="12" height="10" viewBox="0 0 12 10"><path d="M1.5 1.5 L6 8 L10.5 1.5" fill="none" stroke="#333" stroke-width="2"/></svg>
<div class="a" style="left:49px;top:821.0px;width:326px;height:24px;background:linear-gradient(to bottom,#f6f6f6,#e6e6e6 60%,#d2d2d2);border-bottom:1px solid #bbb"></div>
<div class="a" style="left:349px;top:823.0px;width:1px;height:20px;background:#c8c8c8"></div>
<div class="t song" style="left:56px;top:825.0px;font-size:15px;font-weight:bold;color:#000">细节</div>
<svg style="left:356px;top:828.0px" width="12" height="10" viewBox="0 0 12 10"><path d="M1.5 1.5 L6 8 L10.5 1.5" fill="none" stroke="#333" stroke-width="2"/></svg>
<div class="a" style="left:49px;top:845.5px;width:326px;height:24px;background:linear-gradient(to bottom,#f6f6f6,#e6e6e6 60%,#d2d2d2);border-bottom:1px solid #bbb"></div>
<div class="a" style="left:349px;top:847.5px;width:1px;height:20px;background:#c8c8c8"></div>
<div class="t song" style="left:56px;top:849.5px;font-size:15px;font-weight:bold;color:#000">预览</div>
<svg style="left:356px;top:852.5px" width="12" height="10" viewBox="0 0 12 10"><path d="M1.5 1.5 L6 8 L10.5 1.5" fill="none" stroke="#333" stroke-width="2"/></svg>
<div class="a" style="left:5.500px;top:874px;width:492px;height:8px;background:#e6e6e6;border-top:1px solid #f8f8f8"></div><div class="a" style="left:5.500px;top:873px;width:379px;height:1px;background:#b8b8b8"></div><div class="a" style="left:12px;top:877px;width:35px;height:8px;background:#fff;border:1px solid #707070;border-radius:2px"></div><div class="a" style="left:497px;top:875px;width:1px;height:7px;background:#c0c0c0"></div><div class="a" style="left:78px;top:879px;width:6px;height:3px;background:#d03030;border-radius:2px 2px 0 0;opacity:0.8"></div><div class="a" style="left:128px;top:879px;width:6px;height:3px;background:#606060;border-radius:2px 2px 0 0;opacity:0.8"></div><div class="a" style="left:155px;top:879px;width:6px;height:3px;background:#7090b0;border-radius:2px 2px 0 0;opacity:0.8"></div><div class="a" style="left:193px;top:879px;width:6px;height:3px;background:#f09030;border-radius:2px 2px 0 0;opacity:0.8"></div><div class="a" style="left:292px;top:879px;width:6px;height:3px;background:#d09090;border-radius:2px 2px 0 0;opacity:0.8"></div><div class="a" style="left:338px;top:879px;width:6px;height:3px;background:#909090;border-radius:2px 2px 0 0;opacity:0.8"></div><div class="a" style="left:384px;top:879px;width:6px;height:3px;background:#e08020;border-radius:2px 2px 0 0;opacity:0.8"></div><div class="a" style="left:394px;top:879px;width:6px;height:3px;background:#d03030;border-radius:2px 2px 0 0;opacity:0.8"></div><div class="a" style="left:430px;top:879px;width:6px;height:3px;background:#909090;border-radius:2px 2px 0 0;opacity:0.8"></div><div class="a" style="left:462px;top:879px;width:6px;height:3px;background:#606060;border-radius:2px 2px 0 0;opacity:0.8"></div>
<div class="a" style="left:391px;top:234px;width:283px;height:94.500px;background:linear-gradient(to bottom,#0c0c0c 0,#0c0c0c 1px,#747474 1px,#505050 4px,#1c1c1c 9px,#1c1c1c 100%);border-radius:6px;box-shadow:0 0 1px #555"></div><div class="a" style="left:392px;top:257px;width:281px;height:63px;background:#eeeeee"></div><div class="t hei" style="left:399.500px;top:241px;font-size:11.500px;font-weight:bold;color:#fff">自动判断尺寸</div><div class="a" style="left:654px;top:238.500px;width:18px;height:15.500px;background:linear-gradient(to bottom,#e88868,#d04828 50%,#c03010);border:1px solid #f0e0d8;border-radius:3px"></div><svg style="left:658px;top:241.500px" width="10" height="10" viewBox="0 0 10 10"><path d="M1 1 L9 9 M9 1 L1 9" stroke="#fff" stroke-width="2"/></svg><div class="a" style="left:398.5px;top:262px;width:99px;height:56.500px;border:1px solid #b4b4b4;box-shadow:1px 1px 0 #f6f6f6, inset 1px 1px 0 #f0f0f0;background:#dadada"></div><div class="t song" style="left:406px;top:266.500px;font-size:15px;font-weight:bold;color:#000">值</div><div class="a" style="left:501px;top:262px;width:45px;height:56.500px;border:1px solid #b4b4b4;box-shadow:1px 1px 0 #f6f6f6, inset 1px 1px 0 #f0f0f0;background:#dadada"></div><div class="t song" style="left:507.5px;top:266.500px;font-size:15px;font-weight:bold;color:#000">文本</div><div class="a" style="left:549px;top:262px;width:46px;height:56.500px;border:1px solid #b4b4b4;box-shadow:1px 1px 0 #f6f6f6, inset 1px 1px 0 #f0f0f0;background:#dadada"></div><div class="t song" style="left:556px;top:266.500px;font-size:15px;font-weight:bold;color:#000">参考</div><div class="a" style="left:598.5px;top:262px;width:68.5px;height:56.500px;border:1px solid #b4b4b4;box-shadow:1px 1px 0 #f6f6f6, inset 1px 1px 0 #f0f0f0;background:#dadada"></div><div class="t song" style="left:605px;top:266.500px;font-size:15px;font-weight:bold;color:#000">设置</div><div class="t" style="left:418px;top:294.500px;font-size:11px;font-weight:bold;color:#111;font-family:'Liberation Sans',sans-serif">1.00</div><div class="dds" style="left:454.500px;top:299px"></div><div class="t" style="left:475px;top:294.500px;font-size:11px;font-weight:bold;color:#18188c;font-family:'Liberation Sans',sans-serif">1</div><div class="dds" style="left:485px;top:299px"></div><div class="a" style="left:513.500px;top:290.500px;width:19.500px;height:18.500px;background:#fff;border:1.500px solid #282870"></div><div class="t song" style="left:516px;top:290px;font-size:18px;font-weight:bold;color:#000">A</div><svg style="left:560px;top:290.5px" width="24" height="20.5" viewBox="0 0 30 30" preserveAspectRatio="none"><path d="M2 5 L22 5 L26 1 L26 22 L22 26 L2 26 Z" fill="#e8e8f0" stroke="#c03030" stroke-width="1.600"/><path d="M22 5 L26 1 L26 22 L22 26 Z" fill="#d03030"/><g fill="none" stroke="#3040a0" stroke-width="1.800"><circle cx="8" cy="11" r="2.500"/><circle cx="16" cy="11" r="2.500"/><circle cx="8" cy="19" r="2.500"/><circle cx="16" cy="19" r="2.500"/></g><circle cx="23" cy="23" r="5.500" fill="#f0d040" stroke="#303030" stroke-width="1.500"/><rect x="21.500" y="21" width="3" height="5" fill="#303030"/></svg><div class="t" style="left:606px;top:291px;font-size:9px;color:#222;font-family:'Liberation Sans',sans-serif">A</div><div class="t" style="left:612.500px;top:291.500px;font-size:19px;font-weight:bold;font-style:italic;color:#1c2cb0;font-family:'Liberation Sans',sans-serif">A</div><div class="a" style="left:609px;top:307px;width:19px;height:2.500px;background:#1c2cb0"></div><svg style="left:641px;top:289.5px" width="17" height="20.5" viewBox="0 0 30 30" preserveAspectRatio="none"><rect x="2" y="2" width="17" height="20" fill="#fff" stroke="#1c2c90" stroke-width="2.400"/><rect x="2" y="1" width="17" height="4" fill="#1c2c90"/><path d="M27 12 Q29 24 15 24" fill="none" stroke="#2898a8" stroke-width="3.600"/><path d="M8 24 L17 18 L17 30 Z" fill="#2898a8"/></svg>
<div class="a" style="left:1086px;top:204.500px;width:40px;height:211px;background:#d8d8d8;border:1px solid #f2f2f2;border-right-color:#9a9a9a;border-bottom-color:#9a9a9a;box-shadow:2px 2px 3px rgba(0,0,0,0.35)"></div><div class="a" style="left:1088.500px;top:207.500px;width:34px;height:33px;background:linear-gradient(to bottom,#f4f4f4,#dedede);border:1px solid #a8a8a8;border-radius:2px"></div><div class="t" style="left:1096px;top:210px;font-size:12px;font-weight:bold;color:#000;font-family:'Liberation Sans',sans-serif;letter-spacing:-0.500px">ZC</div><svg style="left:1089px;top:208px" width="34" height="32" viewBox="0 0 34 32"><path d="M3 3 L3 22" stroke="#2838a0" stroke-width="1.200"/><path d="M3 19 L16 12 L27 18 L13 25 Z" fill="#e4f6e8" stroke="#30a050" stroke-width="1.200"/><path d="M3 23 L13 29 L20 25" fill="none" stroke="#d04040" stroke-width="1.100"/><path d="M3 22 L9 26" stroke="#d04040" stroke-width="1.100"/></svg><svg style="left:1089px;top:244.5px" width="12" height="24" viewBox="0 0 12 24"><path d="M3 1 L3 18" stroke="#2838a0" stroke-width="1.200"/><path d="M3 8 L9 5 M3 14 L9 11" stroke="#303030" stroke-width="1"/><path d="M3 18 L9 22" stroke="#d04040" stroke-width="1.100"/><path d="M3 18 L8 15" stroke="#30a050" stroke-width="1.100"/></svg><svg style="left:1089px;top:278.5px" width="12" height="24" viewBox="0 0 12 24"><path d="M3 1 L3 18" stroke="#2838a0" stroke-width="1.200"/><path d="M3 8 L9 5 M3 14 L9 11" stroke="#303030" stroke-width="1"/><path d="M3 18 L9 22" stroke="#d04040" stroke-width="1.100"/><path d="M3 18 L8 15" stroke="#30a050" stroke-width="1.100"/></svg><div class="a" style="left:1090px;top:314px;width:30px;height:26.500px;background:linear-gradient(to bottom,#9cb0ec,#eef2fc 60%,#fff);border:1.500px solid #2c4cd0"></div><svg style="left:1092px;top:316px" width="26" height="23" viewBox="0 0 26 23"><path d="M3 8 L3 20 L12 20" fill="none" stroke="#2030b0" stroke-width="1.200"/><path d="M3 20 L3 13 M3 20 L10 20" stroke="#d02020" stroke-width="1.200"/><path d="M1 10 L3 6 L5 10 Z" fill="#d02020"/><path d="M9 18 L13 20 L9 22 Z" fill="#d02020"/><path d="M9 5 L21 1 L24 13 L12 17 Z" fill="#f8e860" stroke="#a09020" stroke-width="0.8"/><text x="13" y="14" font-family="Liberation Serif, serif" font-size="11" font-weight="bold" fill="#303030" transform="rotate(-15 16 10)">A</text></svg><svg style="left:1091px;top:347.500px" width="29" height="28" viewBox="0 0 29 28"><path d="M2 9 L17 4 L23 8 L23 23 L8 28 L2 24 Z" fill="#a8a898" stroke="#88887c" stroke-width="0.8"/><path d="M2 9 L8 13 L23 8 M8 13 L8 28" fill="none" stroke="#c0c0b0" stroke-width="0.8"/><path d="M20 4 L26 1 L28 6 L23 9 Z" fill="#9898b8"/><text x="11" y="24" font-family="Liberation Serif, serif" font-size="12" fill="#c8c8bc">A</text></svg><svg style="left:1091px;top:380px" width="29" height="30" viewBox="0 0 29 30"><path d="M11 6 L11 20 L24 26" fill="none" stroke="#2030b0" stroke-width="1.300"/><path d="M11 20 L24 13" stroke="#30a050" stroke-width="1.300"/><path d="M11 20 L22 25" stroke="#d02020" stroke-width="1.300"/><path d="M8.500 7 L11 1 L13.500 7 Z" fill="#2030b0"/><path d="M22 11 L27 11.500 L24 15.500 Z" fill="#30a050"/><path d="M14 24 Q4 22 3 17" fill="none" stroke="#f08030" stroke-width="3"/><path d="M0 19 L4 13 L7 19 Z" fill="#f08030"/><path d="M17 28.500h3M21.500 28.500h3M26 28.500h3" stroke="#202020" stroke-width="2"/></svg><div class="a" style="left:1096.500px;top:240.500px;width:160px;height:68.500px;background:#fafafa;border:1px solid #b4b4b4;border-radius:5px;box-shadow:2px 2px 4px rgba(0,0,0,0.35)"></div><div class="t hei" style="left:1104px;top:247px;font-size:15px;font-weight:bold;color:#111;letter-spacing:0.300px">基于 <span style="font-size:14px;letter-spacing:-0.600px">WCS</span> 的 <span style="font-size:14px;letter-spacing:-0.600px">XY</span> 平面</div><div class="t hei" style="left:1104px;top:269.500px;font-size:14.500px;color:#222">将注释平面设置为平行于 XC-YC 平</div><div class="t hei" style="left:1104px;top:288px;font-size:14.500px;color:#222">面。</div><svg style="left:0;top:0" width="1241" height="882" viewBox="0 0 1241 882"><line x1="752" y1="390" x2="1096" y2="223" stroke="#e01818" stroke-width="1"/><path d="M1094 219 L1105 219 L1099 227 Z" fill="#e01818"/></svg>
<svg style="left:0;top:0" width="1241" height="882" viewBox="0 0 1241 882"><g font-family="Liberation Sans, Noto Sans CJK SC, sans-serif" font-weight="bold" fill="#fbeaea" stroke="#cc2020" stroke-width="1.150"><text x="1020.500" y="874" font-size="13" textLength="54" lengthAdjust="spacingAndGlyphs">三维网</text><text x="1075" y="874" font-size="14.500" textLength="146" lengthAdjust="spacingAndGlyphs">www.3dportal.cn</text></g></svg>
</body></html>
